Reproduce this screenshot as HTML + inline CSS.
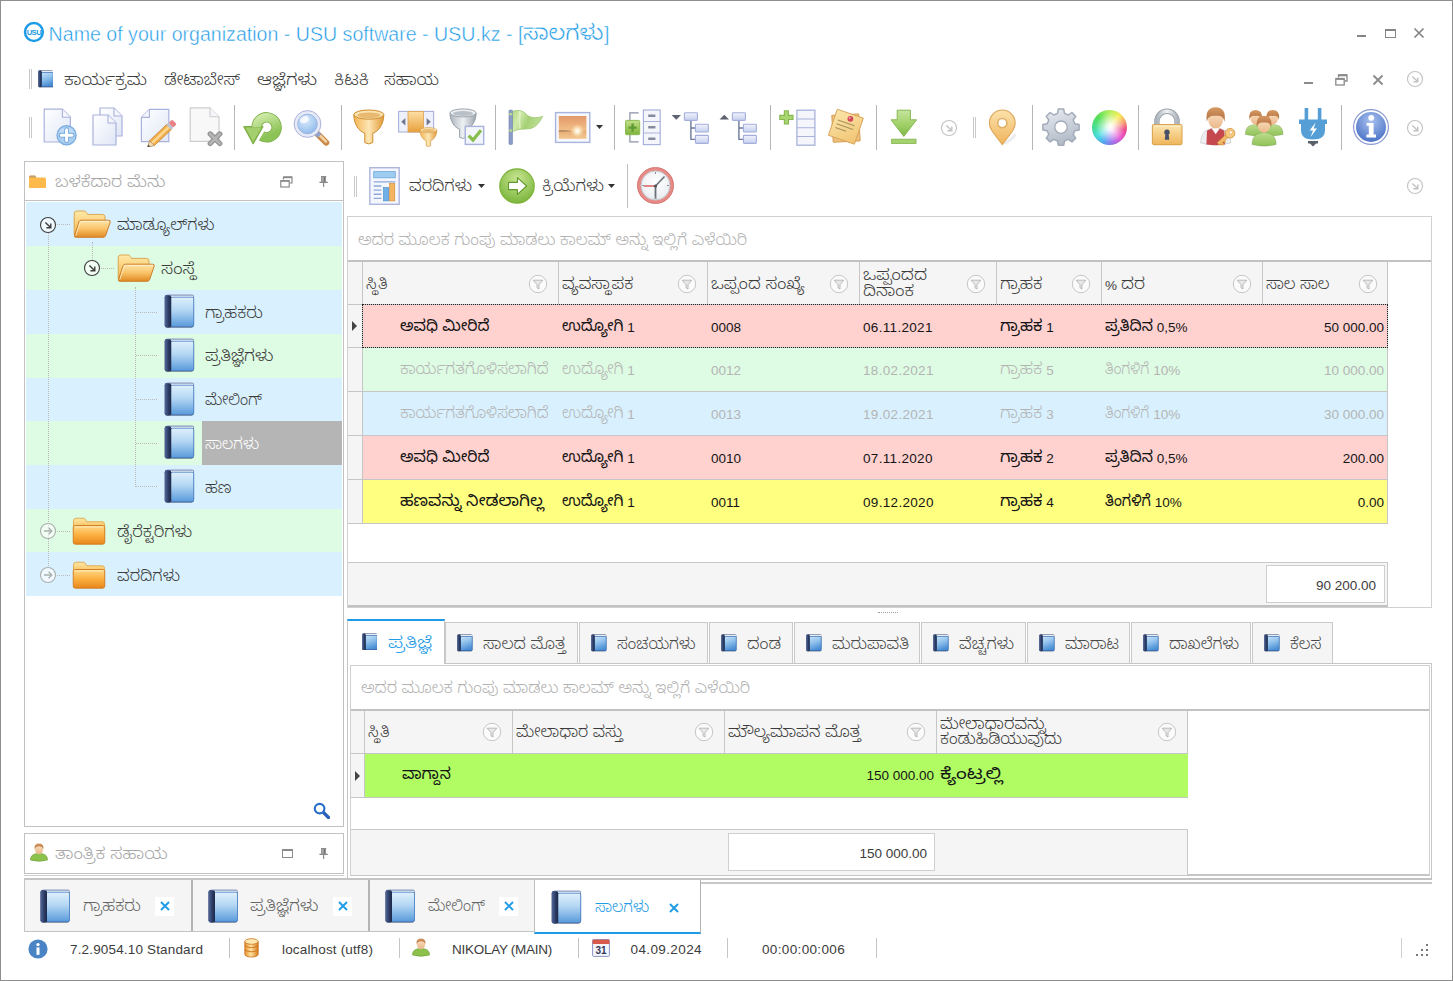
<!DOCTYPE html>
<html lang="kn"><head><meta charset="utf-8"><title>USU software</title>
<style>
html,body{margin:0;padding:0;background:#fff}
body{width:1453px;height:981px;position:relative;overflow:hidden;font-family:"Liberation Sans","Noto Sans Kannada UI","Noto Sans Kannada",sans-serif;font-size:13.5px;color:#3c3c3c}
body>div,body>svg{position:absolute}
.t{white-space:pre}
.k{font-size:1.19em;line-height:0;position:relative;top:-1px;font-weight:330}
.dark .k{font-weight:400}
.title{-webkit-text-stroke:0.45px #fff}
.title .k{font-size:1.12em;font-weight:450}
</style></head>
<body>

<svg width="0" height="0" style="position:absolute;left:0;top:0">
<defs>
<linearGradient id="gBookCover" x1="0" y1="0" x2="0" y2="1"><stop offset="0" stop-color="#dff0fc"/><stop offset="0.45" stop-color="#b3d6f3"/><stop offset="1" stop-color="#5a9bdb"/></linearGradient>
<linearGradient id="gBookCoverS" x1="0" y1="0" x2="0.3" y2="1"><stop offset="0" stop-color="#c9e4f8"/><stop offset="0.5" stop-color="#8fc0ec"/><stop offset="1" stop-color="#4a8fd4"/></linearGradient>
<linearGradient id="gBookSpine" x1="0" y1="0" x2="1" y2="0"><stop offset="0" stop-color="#52679a"/><stop offset="0.6" stop-color="#2a3a62"/><stop offset="1" stop-color="#1d2947"/></linearGradient>
<linearGradient id="gFolderBack" x1="0" y1="0" x2="0" y2="1"><stop offset="0" stop-color="#ffe9a8"/><stop offset="1" stop-color="#f5b64a"/></linearGradient>
<linearGradient id="gFolderFront" x1="0" y1="0" x2="0" y2="1"><stop offset="0" stop-color="#ffd98a"/><stop offset="0.5" stop-color="#fbb040"/><stop offset="1" stop-color="#e8871c"/></linearGradient>
<linearGradient id="gFolderOpen" x1="0" y1="0" x2="0" y2="1"><stop offset="0" stop-color="#ffe7ae"/><stop offset="0.5" stop-color="#f9c368"/><stop offset="1" stop-color="#e08a24"/></linearGradient>
<linearGradient id="gDoc" x1="0" y1="0" x2="1" y2="1"><stop offset="0" stop-color="#ffffff"/><stop offset="1" stop-color="#dfe6f6"/></linearGradient>
<linearGradient id="gGreen" x1="0" y1="0" x2="0" y2="1"><stop offset="0" stop-color="#c4e08a"/><stop offset="1" stop-color="#7eb33a"/></linearGradient>
<linearGradient id="gGreenL" x1="0" y1="0" x2="0.4" y2="1"><stop offset="0" stop-color="#cde9a6"/><stop offset="1" stop-color="#8cc356"/></linearGradient>
<linearGradient id="gGreenD" x1="0" y1="0" x2="0" y2="1"><stop offset="0" stop-color="#b6d87a"/><stop offset="1" stop-color="#6aa52e"/></linearGradient>
<linearGradient id="gOrange" x1="0" y1="0" x2="0" y2="1"><stop offset="0" stop-color="#fde0a4"/><stop offset="1" stop-color="#e9a03c"/></linearGradient>
<linearGradient id="gOrangeH" x1="0" y1="0" x2="1" y2="0"><stop offset="0" stop-color="#f3b453"/><stop offset="0.5" stop-color="#fde6b4"/><stop offset="1" stop-color="#e09a38"/></linearGradient>
<linearGradient id="gGrayH" x1="0" y1="0" x2="1" y2="0"><stop offset="0" stop-color="#aab2ba"/><stop offset="0.5" stop-color="#eef1f4"/><stop offset="1" stop-color="#9aa3ad"/></linearGradient>
<linearGradient id="gGear" x1="0" y1="0" x2="0.3" y2="1"><stop offset="0" stop-color="#e9edf2"/><stop offset="1" stop-color="#b3bcc9"/></linearGradient>
<linearGradient id="gLock" x1="0" y1="0" x2="0" y2="1"><stop offset="0" stop-color="#fce6b0"/><stop offset="1" stop-color="#efb55c"/></linearGradient>
<linearGradient id="gShackle" x1="0" y1="0" x2="1" y2="0"><stop offset="0" stop-color="#aeb5bd"/><stop offset="0.5" stop-color="#f1f3f6"/><stop offset="1" stop-color="#aeb5bd"/></linearGradient>
<linearGradient id="gBodyG" x1="0" y1="0" x2="0" y2="1"><stop offset="0" stop-color="#bcdc8e"/><stop offset="1" stop-color="#8fc257"/></linearGradient>
<radialGradient id="gInfo" cx="0.5" cy="0.3" r="0.8"><stop offset="0" stop-color="#a9c1ee"/><stop offset="1" stop-color="#3f68c2"/></radialGradient>
<radialGradient id="gLens" cx="0.4" cy="0.3" r="0.8"><stop offset="0" stop-color="#dcebfb"/><stop offset="0.6" stop-color="#a9cbf1"/><stop offset="1" stop-color="#86b6ea"/></radialGradient>
<radialGradient id="gGreenBall" cx="0.5" cy="0.3" r="0.8"><stop offset="0" stop-color="#c9e592"/><stop offset="1" stop-color="#6fae2f"/></radialGradient>
<radialGradient id="gClock" cx="0.5" cy="0.4" r="0.7"><stop offset="0" stop-color="#ffffff"/><stop offset="1" stop-color="#e4e9ee"/></radialGradient>
<linearGradient id="gPic" x1="0" y1="0" x2="0" y2="1"><stop offset="0" stop-color="#e2986a"/><stop offset="0.6" stop-color="#f2bd86"/><stop offset="0.68" stop-color="#e8ae78"/><stop offset="1" stop-color="#f3c78e"/></linearGradient>
<radialGradient id="gSun" cx="0.5" cy="0.5" r="0.5"><stop offset="0" stop-color="#ffffff"/><stop offset="0.3" stop-color="#fff6dc" stop-opacity="0.9"/><stop offset="1" stop-color="#fbe0a8" stop-opacity="0"/></radialGradient>
<linearGradient id="gFlag" x1="0" y1="0" x2="1" y2="0.3"><stop offset="0" stop-color="#b4d987"/><stop offset="0.3" stop-color="#cfe9ab"/><stop offset="0.6" stop-color="#a5d074"/><stop offset="1" stop-color="#bfe096"/></linearGradient>
<linearGradient id="gSkin" x1="0" y1="0" x2="0" y2="1"><stop offset="0" stop-color="#fae0c0"/><stop offset="1" stop-color="#ebb88c"/></linearGradient>
<linearGradient id="gHair" x1="0" y1="0" x2="0" y2="1"><stop offset="0" stop-color="#d69a64"/><stop offset="1" stop-color="#b06c3c"/></linearGradient>
<linearGradient id="gBlueBox" x1="0" y1="0" x2="0" y2="1"><stop offset="0" stop-color="#f1f4fc"/><stop offset="1" stop-color="#c5cfee"/></linearGradient>
<linearGradient id="gNote" x1="0" y1="0" x2="1" y2="1"><stop offset="0" stop-color="#fbe6aa"/><stop offset="1" stop-color="#f1c473"/></linearGradient>
<linearGradient id="gGreenDL" x1="0" y1="0" x2="0" y2="1"><stop offset="0" stop-color="#c6e49e"/><stop offset="0.5" stop-color="#a4d26c"/><stop offset="1" stop-color="#7fb846"/></linearGradient>
<linearGradient id="gPin" x1="0" y1="0" x2="0" y2="1"><stop offset="0" stop-color="#fce2ac"/><stop offset="1" stop-color="#f0b45c"/></linearGradient>
<linearGradient id="gDb" x1="0" y1="0" x2="1" y2="0"><stop offset="0" stop-color="#e8902c"/><stop offset="0.45" stop-color="#ffe2a0"/><stop offset="1" stop-color="#d97c1c"/></linearGradient>
</defs></svg>

<div style="left:0px;top:0px;width:1453px;height:981px;border:1px solid #8e8e8e;box-sizing:border-box;background:#fff"></div>
<svg style="position:absolute;left:23px;top:21.2px" width="22" height="22" viewBox="0 0 22 22" ><circle cx="10.9" cy="11" r="8.9" fill="#fff" stroke="#1e9be6" stroke-width="2.5"/><text x="10.9" y="13.7" font-family="Liberation Sans, sans-serif" font-size="7.6" font-weight="bold" text-anchor="middle" fill="#1e9be6" letter-spacing="-0.5">USU</text></svg>
<div class="t title" style="left:48.6px;top:18.5px;height:30px;line-height:30px;color:#1e9be6;font-size:19.6px;">Name of your organization - USU software - USU.kz - [</div>
<div class="t title" style="left:523.4px;width:81.6px;overflow:hidden;transform:scaleX(1.005);transform-origin:0 50%;top:18.5px;height:30px;line-height:30px;color:#1e9be6;font-size:19.6px;"><span class="k">ಸಾಲಗಳು</span></div>
<div class="t title" style="left:603.9px;top:18.5px;height:30px;line-height:30px;color:#1e9be6;font-size:19.6px;">]</div>
<div style="left:1357px;top:35px;width:9px;height:2px;background:#858585"></div>
<div style="left:1385px;top:29px;width:11px;height:9px;border:1px solid #858585;border-top-width:2px;box-sizing:border-box"></div>
<svg style="position:absolute;left:1413px;top:27px" width="12" height="12" viewBox="0 0 12 12" ><path d="M1.5 1.5 L10.5 10.5 M10.5 1.5 L1.5 10.5" stroke="#858585" stroke-width="1.7"/></svg>
<div style="left:29px;top:69px;width:1px;height:20px;background:#c9c9c9"></div>
<div style="left:31px;top:69px;width:1px;height:20px;background:#c9c9c9"></div>
<svg style="position:absolute;left:37.5px;top:70px" width="15.5" height="17.5" viewBox="0 0 15.5 17.5" ><rect x="0.3" y="0.6" width="15" height="16.6" rx="1.2" fill="#22315a"/><rect x="3" y="0.9" width="12" height="1.6" fill="#f4f8fc"/><rect x="3.4" y="2.4" width="11.8" height="14.2" rx="0.8" fill="url(#gBookCoverS)" stroke="#3f78c0" stroke-width="0.7"/><rect x="0.3" y="0.6" width="3.4" height="16.6" rx="1.2" fill="url(#gBookSpine)"/></svg>
<div class="t" style="left:64.0px;width:76.0px;overflow:hidden;transform:scaleX(1.115);transform-origin:0 50%;top:70.0px;height:24px;line-height:24px;color:#3c3c3c"><span class="k">ಕಾರ್ಯಕ್ರಮ</span></div>
<div class="t" style="left:164.0px;width:73.4px;overflow:hidden;transform:scaleX(1.057);transform-origin:0 50%;top:70.0px;height:24px;line-height:24px;color:#3c3c3c"><span class="k">ಡೇಟಾಬೇಸ್</span></div>
<div class="t" style="left:257.0px;width:53.4px;overflow:hidden;transform:scaleX(1.156);transform-origin:0 50%;top:70.0px;height:24px;line-height:24px;color:#3c3c3c"><span class="k">ಆಜ್ಞೆಗಳು</span></div>
<div class="t" style="left:334.0px;width:31.7px;overflow:hidden;transform:scaleX(1.160);transform-origin:0 50%;top:70.0px;height:24px;line-height:24px;color:#3c3c3c"><span class="k">ಕಿಟಕಿ</span></div>
<div class="t" style="left:384.0px;width:52.9px;overflow:hidden;transform:scaleX(1.069);transform-origin:0 50%;top:70.0px;height:24px;line-height:24px;color:#3c3c3c"><span class="k">ಸಹಾಯ</span></div>
<div style="left:1304px;top:82px;width:9px;height:2px;background:#8a8a8a"></div>
<svg style="position:absolute;left:1335px;top:74px" width="13" height="12" viewBox="0 0 13 12" ><path d="M3.5 3.5 V1 H12 V7 H9.5" fill="none" stroke="#8a8a8a" stroke-width="1.3"/><path d="M3.5 1.3 H12" stroke="#8a8a8a" stroke-width="2"/><rect x="0.8" y="4.6" width="8.4" height="6.4" fill="#fff" stroke="#8a8a8a" stroke-width="1.3"/><path d="M0.8 4.9 H9.2" stroke="#8a8a8a" stroke-width="2"/></svg>
<svg style="position:absolute;left:1372px;top:73.5px" width="12" height="12" viewBox="0 0 12 12" ><path d="M1.5 1.5 L10.5 10.5 M10.5 1.5 L1.5 10.5" stroke="#8a8a8a" stroke-width="1.8"/></svg>
<svg style="position:absolute;left:1405.7px;top:70px" width="18" height="18" viewBox="0 0 18 18" ><g transform="translate(9 9)"><circle r="7.5" fill="#fff" fill-opacity="0.6" stroke="#c2c2c2" stroke-width="1.1"/><path d="M-2.6 -2.6 L2.6 2.6 M2.8 -1.6 V2.8 H-1.6" fill="none" stroke="#c2c2c2" stroke-width="1.4000000000000001"/></g></svg>
<div style="left:29px;top:117px;width:1px;height:21px;background:#c9c9c9"></div>
<div style="left:31px;top:117px;width:1px;height:21px;background:#c9c9c9"></div>
<svg style="position:absolute;left:40.0px;top:107.0px" width="40" height="40" viewBox="0 0 40 40" ><path d="M4.2 2.2 H22.4 L30.4 10.2 V35.0 H4.2 Z" fill="url(#gDoc)" stroke="#a9b2dc" stroke-width="1.2" stroke-linejoin="round"/><path d="M22.4 2.2 V10.2 H30.4" fill="#f4f6fc" stroke="#a9b2dc" stroke-width="1.1" stroke-linejoin="round"/><circle cx="26.6" cy="28.2" r="9.6" fill="#a9cef1" stroke="#78abde" stroke-width="1.2"/><path d="M19 26 A8 8 0 0 1 34.2 26 Q26.6 22.5 19 26 Z" fill="#c6e0f7" opacity="0.8"/><path d="M26.6 22.6 V33.8 M21 28.2 H32.2" stroke="#6fa3d8" stroke-width="4.6" stroke-linecap="round"/><path d="M26.6 22.8 V33.6 M21.2 28.2 H32" stroke="#fff" stroke-width="3" stroke-linecap="round"/></svg>
<svg style="position:absolute;left:88.0px;top:107.0px" width="40" height="40" viewBox="0 0 40 40" ><path d="M12 1 H26 L34 9 V29 H12 Z" fill="url(#gDoc)" stroke="#a9b2dc" stroke-width="1.2" stroke-linejoin="round"/><path d="M26 1 V9 H34" fill="#f4f6fc" stroke="#a9b2dc" stroke-width="1.1" stroke-linejoin="round"/><path d="M5 8 H20 L28 16 V38 H5 Z" fill="url(#gDoc)" stroke="#a9b2dc" stroke-width="1.2" stroke-linejoin="round"/><path d="M20 8 V16 H28" fill="#f4f6fc" stroke="#a9b2dc" stroke-width="1.1" stroke-linejoin="round"/></svg>
<svg style="position:absolute;left:137.0px;top:107.0px" width="40" height="40" viewBox="0 0 40 40" ><path d="M12.4 2.4 H31.8 V34.7 H4.4 V10.4 Z" fill="url(#gDoc)" stroke="#a9b2dc" stroke-width="1.2" stroke-linejoin="round"/><path d="M12.4 2.4 V10.4 H4.4" fill="#f4f6fc" stroke="#a9b2dc" stroke-width="1.1" stroke-linejoin="round"/><g transform="translate(12.8 38.2) rotate(-43.5)"><rect x="3" y="-3.4" width="24" height="6.8" fill="#f3b04a" stroke="#c9832a" stroke-width="0.8"/><rect x="3" y="-1.3" width="24" height="2.4" fill="#fbd894"/><path d="M3 -3.4 L-3.5 0 L3 3.4 Z" fill="#f3d9b0" stroke="#b08a5a" stroke-width="0.7"/><path d="M-3.5 0 L-0.6 -1.5 V1.5 Z" fill="#555"/><rect x="26" y="-3.4" width="3" height="6.8" fill="#b9c4d4"/><rect x="29" y="-3.4" width="5" height="6.8" rx="1.6" fill="#e8838a"/></g></svg>
<svg style="position:absolute;left:186.0px;top:107.0px" width="40" height="40" viewBox="0 0 40 40" ><path d="M4.2 0.8 H24.0 L33.0 9.8 V34.3 H4.2 Z" fill="#f8f8f8" stroke="#cdcdcd" stroke-width="1.2" stroke-linejoin="round"/><path d="M24.0 0.8 V9.8 H33.0" fill="#f4f6fc" stroke="#cdcdcd" stroke-width="1.1" stroke-linejoin="round"/><path d="M24.2 26.9 L33.8 36.5 M33.8 26.9 L24.2 36.5" stroke="#939393" stroke-width="5.2" stroke-linecap="round"/><path d="M24.2 26.9 L33.8 36.5 M33.8 26.9 L24.2 36.5" stroke="#b4b4b4" stroke-width="2.8" stroke-linecap="round"/></svg>
<svg style="position:absolute;left:243.0px;top:107.0px" width="40" height="40" viewBox="0 0 40 40" ><path d="M18.6 29 A10 10 0 1 0 13.6 20.3" fill="none" stroke="#7fb04a" stroke-width="10.4"/><path d="M1 19.6 H19.8 L10.2 36.6 Z" fill="#7fb04a" stroke="#7fb04a" stroke-width="1.4" stroke-linejoin="round"/><path d="M18.6 29 A10 10 0 1 0 13.6 20.3" fill="none" stroke="url(#gGreenL)" stroke-width="8.6"/><path d="M2.4 20.4 H18.4 L10.2 35 Z" fill="#a3d06c"/></svg>
<svg style="position:absolute;left:292.0px;top:107.0px" width="40" height="40" viewBox="0 0 40 40" ><path d="M25 26.5 L34.2 35.6" stroke="#c98a4a" stroke-width="6.2" stroke-linecap="round"/><path d="M25.4 26 L34 34.6" stroke="#f6d2a0" stroke-width="2.6" stroke-linecap="round"/><path d="M23 24.5 L27.5 29" stroke="#8fa2cc" stroke-width="5.2"/><circle cx="15.5" cy="17" r="13.4" fill="#e6eaf7" stroke="#a4acd6" stroke-width="0.9"/><circle cx="15.5" cy="17" r="9.8" fill="url(#gLens)" stroke="#9ab0dc" stroke-width="0.9"/><ellipse cx="12.4" cy="12.6" rx="4.6" ry="3.2" fill="#fff" opacity="0.75" transform="rotate(-25 12.4 12.6)"/></svg>
<svg style="position:absolute;left:349.0px;top:107.0px" width="40" height="40" viewBox="0 0 40 40" ><g transform="translate(4.8 2.6) scale(1.0)"><path d="M0 5 C0 15 5.5 22 11 23.6 V33 Q15 35.6 19 33 V23.6 C24.5 22 30 15 30 5 Z" fill="url(#gOrangeH)" stroke="#cf8e30" stroke-width="1"/><ellipse cx="15" cy="5" rx="15" ry="4.6" fill="#fbe3b0" stroke="#cf8e30" stroke-width="1"/><ellipse cx="15" cy="5.7" rx="11.6" ry="2.9" fill="#d9983c" opacity="0.55"/></g></svg>
<svg style="position:absolute;left:398.0px;top:107.0px" width="40" height="40" viewBox="0 0 40 40" ><rect x="0.6" y="4.4" width="35" height="20.6" fill="#eef1fb" stroke="#a9b2dc" stroke-width="1.1"/><rect x="10" y="4.4" width="15.4" height="20.6" fill="url(#gOrange)" stroke="#dda04c" stroke-width="0.8"/><path d="M7.4 11 V18.4 L3.2 14.7 Z M28.6 11 V18.4 L32.8 14.7 Z" fill="#707890"/><g transform="translate(22 20.4) scale(0.56)"><path d="M0 5 C0 15 5.5 22 11 23.6 V33 Q15 35.6 19 33 V23.6 C24.5 22 30 15 30 5 Z" fill="url(#gOrangeH)" stroke="#cf8e30" stroke-width="1"/><ellipse cx="15" cy="5" rx="15" ry="4.6" fill="#fbe3b0" stroke="#cf8e30" stroke-width="1"/><ellipse cx="15" cy="5.7" rx="11.6" ry="2.9" fill="#d9983c" opacity="0.55"/></g></svg>
<svg style="position:absolute;left:447.0px;top:107.0px" width="40" height="40" viewBox="0 0 40 40" ><g transform="translate(3 1.6) scale(0.87)"><path d="M0 5 C0 15 5.5 22 11 23.6 V33 Q15 35.6 19 33 V23.6 C24.5 22 30 15 30 5 Z" fill="url(#gGrayH)" stroke="#8f98a2" stroke-width="1"/><ellipse cx="15" cy="5" rx="15" ry="4.6" fill="#eef1f4" stroke="#8f98a2" stroke-width="1"/><ellipse cx="15" cy="5.7" rx="11.6" ry="2.9" fill="#8f98a2" opacity="0.55"/></g><rect x="18.3" y="19.4" width="18.4" height="18" fill="#f3f5fc" stroke="#a9b2dc" stroke-width="1.4"/><path d="M21.6 28.6 L26 33 L34 23.2" fill="none" stroke="#86bf4e" stroke-width="3.2"/></svg>
<svg style="position:absolute;left:505.0px;top:107.0px" width="40" height="40" viewBox="0 0 40 40" ><path d="M7.2 4.6 C13 2.4 18 3.4 21.5 7.4 C25 11 31 11.6 37.6 9.4 C35 14.5 31 20.6 25 21.6 C19 22.6 13 21.2 7.2 25 Z" fill="url(#gFlag)" stroke="#9cc772" stroke-width="0.8"/><path d="M15 4 C14 10 14 16 15 21.5" fill="none" stroke="#e4f3c8" stroke-width="2" opacity="0.7"/><rect x="4" y="3" width="3.5" height="34.6" rx="1" fill="#8c9cc8" stroke="#7484b4" stroke-width="0.6"/><rect x="4.2" y="6" width="3.1" height="2.2" fill="#b9d98a"/><rect x="4.2" y="22.5" width="3.1" height="2.2" fill="#b9d98a"/></svg>
<svg style="position:absolute;left:553.0px;top:107.0px" width="40" height="40" viewBox="0 0 40 40" ><rect x="2.6" y="5.6" width="34.2" height="29.8" fill="#f6f8fd" stroke="#a9b4dc" stroke-width="1.4"/><rect x="5.8" y="9" width="27.6" height="22.8" fill="url(#gPic)"/><path d="M5.8 23.2 Q12 22.4 19 24.2 L5.8 25 Z" fill="#8a6a4a" opacity="0.55"/><circle cx="24.3" cy="24" r="7" fill="url(#gSun)"/></svg>
<svg style="position:absolute;left:623.0px;top:107.0px" width="40" height="40" viewBox="0 0 40 40" ><path d="M15.6 5.9 H6.9 V34.8 H15.6" fill="none" stroke="#8a90a4" stroke-width="1.2"/><rect x="20.4" y="3" width="16.8" height="34.6" fill="#f4f6fc" stroke="#a9b2dc" stroke-width="1.2"/><path d="M20.4 14.5 H37.2 M20.4 26 H37.2" stroke="#a9b2dc" stroke-width="1.1"/><path d="M25.2 8.8 H32.4 M25.2 20.2 H32.4 M25.2 31.8 H32.4" stroke="#858b9c" stroke-width="2.4"/><rect x="2.5" y="13.4" width="14.2" height="14.3" rx="1" fill="url(#gGreen)" stroke="#8cbc55" stroke-width="1"/><path d="M9.6 16.6 V24.6 M5.6 20.6 H13.6" stroke="#5f9a32" stroke-width="2.4"/></svg>
<svg style="position:absolute;left:671.0px;top:107.0px" width="40" height="40" viewBox="0 0 40 40" ><path d="M0.6 8 H10 L5.3 12.8 Z" fill="#5d6170"/><path d="M19.9 13.4 V32.4 H25 M19.9 21 H25" fill="none" stroke="#6f7898" stroke-width="1.4"/><rect x="13.4" y="5.8" width="13" height="7.6" rx="0.8" fill="url(#gBlueBox)" stroke="#a4aedb" stroke-width="1.1"/><rect x="24.4" y="17.2" width="13" height="7.8" rx="0.8" fill="url(#gBlueBox)" stroke="#a4aedb" stroke-width="1.1"/><rect x="24.4" y="28.4" width="13" height="8" rx="0.8" fill="url(#gBlueBox)" stroke="#a4aedb" stroke-width="1.1"/></svg>
<svg style="position:absolute;left:719.0px;top:107.0px" width="40" height="40" viewBox="0 0 40 40" ><path d="M0.6 12.6 H10 L5.3 7.8 Z" fill="#5d6170"/><path d="M19.9 13.4 V32.4 H25 M19.9 21 H25" fill="none" stroke="#6f7898" stroke-width="1.4"/><rect x="13.4" y="5.8" width="13" height="7.6" rx="0.8" fill="url(#gBlueBox)" stroke="#a4aedb" stroke-width="1.1"/><rect x="24.4" y="17.2" width="13" height="7.8" rx="0.8" fill="url(#gBlueBox)" stroke="#a4aedb" stroke-width="1.1"/><rect x="24.4" y="28.4" width="13" height="8" rx="0.8" fill="url(#gBlueBox)" stroke="#a4aedb" stroke-width="1.1"/></svg>
<svg style="position:absolute;left:777.0px;top:107.0px" width="40" height="40" viewBox="0 0 40 40" ><rect x="19.9" y="3.2" width="18" height="35" fill="#f4f6fc" stroke="#a9b2dc" stroke-width="1.3"/><path d="M19.9 12 H37.9 M19.9 20.7 H37.9 M19.9 29.5 H37.9" stroke="#a9b2dc" stroke-width="1.1"/><path d="M9.4 3.2 V17.6 M2.2 10.4 H16.6" stroke="#86b84e" stroke-width="5.2"/><path d="M9.4 4.2 V16.6 M3.2 10.4 H15.6" stroke="#a9d472" stroke-width="3"/></svg>
<svg style="position:absolute;left:826.0px;top:107.0px" width="40" height="40" viewBox="0 0 40 40" ><g transform="translate(0 1.6)"><g transform="rotate(-3 20 20)"><rect x="6.5" y="6" width="27" height="27" fill="#efc07a" stroke="#d39a50" stroke-width="0.9"/></g><g transform="rotate(19 20 20)"><rect x="5.5" y="4.5" width="27.5" height="27.5" fill="url(#gNote)" stroke="#d8a45a" stroke-width="0.9"/><path d="M9.5 14.5 H27 M9.5 18.5 H27 M9.5 22.5 H21" stroke="#a8925e" stroke-width="1.1"/></g><circle cx="24.4" cy="10.2" r="2.9" fill="#d2465a"/><circle cx="23.7" cy="9.4" r="1" fill="#f3a0aa"/></g></svg>
<svg style="position:absolute;left:884.0px;top:107.0px" width="40" height="40" viewBox="0 0 40 40" ><path d="M13.2 3.2 H26.4 V12.8 H32.6 L19.8 29.4 L7 12.8 H13.2 Z" fill="url(#gGreenDL)" stroke="#86b852" stroke-width="1" stroke-linejoin="round"/><rect x="7.6" y="32.2" width="24.4" height="4.2" fill="#a5d26e" stroke="#86b852" stroke-width="0.9"/></svg>
<svg style="position:absolute;left:982.0px;top:107.0px" width="40" height="40" viewBox="0 0 40 40" ><path d="M22 36.5 Q30 33 33.5 27" fill="none" stroke="#000" stroke-width="3" opacity="0.07"/><path d="M20.3 37.6 C13 27.5 7.4 22.4 7.4 15.9 A12.9 12.9 0 0 1 33.2 15.9 C33.2 22.4 27.6 27.5 20.3 37.6 Z" fill="url(#gPin)" stroke="#dda657" stroke-width="1.1"/><circle cx="20.3" cy="16.1" r="4.6" fill="#fff" stroke="#e0b06a" stroke-width="1.6"/></svg>
<svg style="position:absolute;left:1041.0px;top:107.0px" width="40" height="40" viewBox="0 0 40 40" ><path d="M17.3 2.1 L22.7 2.1 L23.5 6.4 L27.2 8.0 L30.9 5.5 L34.7 9.3 L32.2 13.0 L33.8 16.7 L38.1 17.5 L38.1 22.9 L33.8 23.7 L32.2 27.4 L34.7 31.1 L30.9 34.9 L27.2 32.4 L23.5 34.0 L22.7 38.3 L17.3 38.3 L16.5 34.0 L12.8 32.4 L9.1 34.9 L5.3 31.1 L7.8 27.4 L6.2 23.7 L1.9 22.9 L1.9 17.5 L6.2 16.7 L7.8 13.0 L5.3 9.3 L9.1 5.5 L12.8 8.0 L16.5 6.4 Z" fill="url(#gGear)" stroke="#a3abb9" stroke-width="1.5" stroke-linejoin="round"/><circle cx="20" cy="20.2" r="6.2" fill="#fff" stroke="#a3abb9" stroke-width="1.3"/></svg>
<div style="position:absolute;left:1091.8px;top:109.8px;width:35px;height:35px;border-radius:50%;background:radial-gradient(circle at 52% 50%, #fff 0%, rgba(255,255,255,0.85) 14%, rgba(255,255,255,0) 58%),conic-gradient(from 0deg, #b4f060 0deg, #f8ee5c 40deg, #f8a070 70deg, #f04a90 98deg, #e85cd8 135deg, #9a7af0 172deg, #5aa8f4 200deg, #4ae0e0 235deg, #48e094 270deg, #56e058 312deg, #b4f060 360deg);box-shadow: inset 0 -1px 3px rgba(0,0,0,0.10)"></div>
<svg style="position:absolute;left:1146.5px;top:107.0px" width="40" height="40" viewBox="0 0 40 40" ><path d="M9.9 19 V14.4 A10.1 10.1 0 0 1 30.1 14.4 V19" fill="none" stroke="#98a0a9" stroke-width="5.4"/><path d="M9.9 19 V14.4 A10.1 10.1 0 0 1 30.1 14.4 V19" fill="none" stroke="url(#gShackle)" stroke-width="3.6"/><rect x="5.4" y="17.6" width="29.6" height="20" rx="1.6" fill="url(#gLock)" stroke="#dba652" stroke-width="1.1"/><path d="M6.6 19 H33.8" stroke="#fff1cf" stroke-width="1"/><circle cx="20" cy="25.2" r="2.7" fill="#465068"/><path d="M18.6 25.6 L17.7 32.8 H22.3 L21.4 25.6 Z" fill="#465068"/></svg>
<svg style="position:absolute;left:1196.0px;top:107.0px" width="40" height="40" viewBox="0 0 40 40" ><g transform="translate(4.6 1.2) scale(1.16)"><path d="M0 30 Q0 19.5 8.5 17.8 L13 17 L17.5 17.8 Q26 19.5 26 30 Q13 33.5 0 30 Z" fill="#eceef2" stroke="rgba(0,0,0,0.16)" stroke-width="0.7"/><path d="M5.5 19.4 L9.4 17.6 L13 22.5 L16.6 17.6 L20.5 19.4 L21 31.4 Q13 32.6 5 31.4 Z" fill="#c6484f"/><path d="M10.4 17.4 L13 21.4 L15.6 17.4 L14.6 16.6 H11.4 Z" fill="#fff"/><ellipse cx="13" cy="9.8" rx="6.4" ry="7.8" fill="url(#gSkin)"/><path d="M5.4 11.6 Q3.4 -0.6 13 -0.8 Q22.6 -0.6 20.6 11.6 Q19.6 5.6 13 6.6 Q6.4 5.6 5.4 11.6 Z" fill="url(#gHair)"/></g><g transform="translate(22.5 37) rotate(-43)"><rect x="0" y="-1.8" width="12" height="3.6" fill="#f2bc66" stroke="#cf913e" stroke-width="0.6"/><path d="M2 1.8 V4 H4 V1.8 M5.5 1.8 V3.4 H7 V1.8" fill="#f2bc66" stroke="#cf913e" stroke-width="0.5"/><circle cx="15.8" cy="0" r="4.8" fill="#f6c97e" stroke="#cf913e" stroke-width="0.8"/><circle cx="17" cy="0" r="1.5" fill="#fff" stroke="#cf913e" stroke-width="0.4"/></g></svg>
<svg style="position:absolute;left:1244.0px;top:107.0px" width="40" height="40" viewBox="0 0 40 40" ><g transform="translate(1.2 3.6) scale(0.8)"><path d="M0 30 Q0 19.5 8.5 17.8 L13 17 L17.5 17.8 Q26 19.5 26 30 Q13 33.5 0 30 Z" fill="url(#gBodyG)" stroke="rgba(0,0,0,0.16)" stroke-width="0.7"/><ellipse cx="13" cy="9.8" rx="6.4" ry="7.8" fill="url(#gSkin)"/><path d="M5.4 11.6 Q3.4 -0.6 13 -0.8 Q22.6 -0.6 20.6 11.6 Q19.6 5.6 13 6.6 Q6.4 5.6 5.4 11.6 Z" fill="url(#gHair)"/></g><g transform="translate(18.4 3.6) scale(0.8)"><path d="M0 30 Q0 19.5 8.5 17.8 L13 17 L17.5 17.8 Q26 19.5 26 30 Q13 33.5 0 30 Z" fill="url(#gBodyG)" stroke="rgba(0,0,0,0.16)" stroke-width="0.7"/><ellipse cx="13" cy="9.8" rx="6.4" ry="7.8" fill="url(#gSkin)"/><path d="M5.4 11.6 Q3.4 -0.6 13 -0.8 Q22.6 -0.6 20.6 11.6 Q19.6 5.6 13 6.6 Q6.4 5.6 5.4 11.6 Z" fill="url(#gHair)"/></g><g transform="translate(7.8 9.4) scale(0.94)"><path d="M0 30 Q0 19.5 8.5 17.8 L13 17 L17.5 17.8 Q26 19.5 26 30 Q13 33.5 0 30 Z" fill="url(#gBodyG)" stroke="rgba(0,0,0,0.16)" stroke-width="0.7"/><ellipse cx="13" cy="9.8" rx="6.4" ry="7.8" fill="url(#gSkin)"/><path d="M5.4 11.6 Q3.4 -0.6 13 -0.8 Q22.6 -0.6 20.6 11.6 Q19.6 5.6 13 6.6 Q6.4 5.6 5.4 11.6 Z" fill="url(#gHair)"/></g></svg>
<svg style="position:absolute;left:1292.5px;top:107.0px" width="40" height="40" viewBox="0 0 40 40" ><rect x="11.6" y="1" width="3.6" height="14" fill="#559fd6"/><rect x="24.8" y="1" width="3.6" height="14" fill="#559fd6"/><path d="M6 12.5 H34 V17 H32 V23 Q32 32.5 20 32.5 Q8 32.5 8 23 V17 H6 Z" fill="#559fd6"/><path d="M22.6 15.5 L16.6 23.6 H20 L17.6 30 L24 21.4 H20.6 Z" fill="#fff"/><path d="M15 34 H25 V36.4 H23 L20 39.4 L17 36.4 H15 Z" fill="#5a6068"/></svg>
<svg style="position:absolute;left:1350.5px;top:107.0px" width="40" height="40" viewBox="0 0 40 40" ><circle cx="20" cy="20" r="17.4" fill="#fff" stroke="#8a9ad0" stroke-width="1.2"/><circle cx="20" cy="20" r="15" fill="url(#gInfo)"/><circle cx="20.2" cy="10.8" r="2.9" fill="#fff"/><path d="M15.6 16 H22.6 V27.6 H25 V30.4 H15.4 V27.6 H17.8 V18.8 H15.6 Z" fill="#fff"/></svg>
<div style="left:234px;top:105px;width:1px;height:45px;background:#b6b6b6"></div>
<div style="left:341px;top:105px;width:1px;height:45px;background:#b6b6b6"></div>
<div style="left:495px;top:105px;width:1px;height:45px;background:#b6b6b6"></div>
<div style="left:614px;top:105px;width:1px;height:45px;background:#b6b6b6"></div>
<div style="left:770px;top:105px;width:1px;height:45px;background:#b6b6b6"></div>
<div style="left:876px;top:105px;width:1px;height:45px;background:#b6b6b6"></div>
<div style="left:1032px;top:105px;width:1px;height:45px;background:#b6b6b6"></div>
<div style="left:1138px;top:105px;width:1px;height:45px;background:#b6b6b6"></div>
<div style="left:1341px;top:105px;width:1px;height:45px;background:#b6b6b6"></div>
<svg style="position:absolute;left:596px;top:125px" width="7" height="4" viewBox="0 0 7 4" ><path d="M0 0 H7 L3.5 4 Z" fill="#333"/></svg>
<svg style="position:absolute;left:939.5px;top:119px" width="18" height="18" viewBox="0 0 18 18" ><g transform="translate(9 9)"><circle r="7.5" fill="#fff" fill-opacity="0.6" stroke="#c2c2c2" stroke-width="1.1"/><path d="M-2.6 -2.6 L2.6 2.6 M2.8 -1.6 V2.8 H-1.6" fill="none" stroke="#c2c2c2" stroke-width="1.4000000000000001"/></g></svg>
<div style="left:973px;top:117px;width:1px;height:21px;background:#c9c9c9"></div>
<div style="left:975px;top:117px;width:1px;height:21px;background:#c9c9c9"></div>
<svg style="position:absolute;left:1405.7px;top:118.5px" width="18" height="18" viewBox="0 0 18 18" ><g transform="translate(9 9)"><circle r="7.5" fill="#fff" fill-opacity="0.6" stroke="#c2c2c2" stroke-width="1.1"/><path d="M-2.6 -2.6 L2.6 2.6 M2.8 -1.6 V2.8 H-1.6" fill="none" stroke="#c2c2c2" stroke-width="1.4000000000000001"/></g></svg>
<div style="left:24px;top:161px;width:320px;height:666px;border:1px solid #c2c2c2;box-sizing:border-box;background:#fff"></div>
<div style="left:25px;top:200px;width:318px;height:1px;background:#c2c2c2"></div>
<svg style="position:absolute;left:29px;top:175px" width="17" height="13" viewBox="0 0 17 13" ><path d="M0 2 Q0 0.5 1.5 0.5 H6 L7.5 2.5 H15.5 Q17 2.5 17 4 V12 Q17 13 16 13 H1 Q0 13 0 12 Z" fill="#fdb94a"/><path d="M0 2 Q0 0.5 1.5 0.5 H6 L7.5 2.5 H0 Z" fill="#8a8a8a" opacity="0.55"/></svg>
<div class="t" style="left:54.5px;width:102.2px;overflow:hidden;transform:scaleX(1.097);transform-origin:0 50%;top:171.5px;height:24px;line-height:24px;color:#a6a6a6"><span class="k">ಬಳಕೆದಾರ ಮೆನು</span></div>
<svg style="position:absolute;left:280px;top:175.5px" width="13" height="12" viewBox="0 0 13 12" ><path d="M3.5 3.5 V1 H12 V7 H9.5" fill="none" stroke="#8a8a8a" stroke-width="1.2"/><path d="M3.5 1.3 H12" stroke="#8a8a8a" stroke-width="1.8"/><rect x="0.8" y="4.6" width="8.4" height="6.4" fill="#fff" stroke="#8a8a8a" stroke-width="1.2"/><path d="M0.8 4.9 H9.2" stroke="#8a8a8a" stroke-width="1.8"/></svg>
<svg style="position:absolute;left:319px;top:176px" width="9" height="11.5" viewBox="0 0 9 11.5" ><path d="M2 0.6 H7.2" stroke="#8a8a8a" stroke-width="1.2"/><rect x="2.6" y="0.6" width="4" height="5.6" fill="#a8a8a8" stroke="#8a8a8a" stroke-width="0.9"/><path d="M5.4 1 V6" stroke="#777" stroke-width="1.2"/><path d="M0.4 6.4 H8.8 M4.6 6.6 V11" fill="none" stroke="#8a8a8a" stroke-width="1.2"/></svg>
<div style="left:25.5px;top:202px;width:316px;height:44px;background:#d9f1ff"></div>
<div style="left:25.5px;top:246px;width:316px;height:44px;background:#defbe3"></div>
<div style="left:25.5px;top:290px;width:316px;height:44px;background:#d9f1ff"></div>
<div style="left:25.5px;top:334px;width:316px;height:44px;background:#defbe3"></div>
<div style="left:25.5px;top:378px;width:316px;height:43px;background:#d9f1ff"></div>
<div style="left:25.5px;top:421px;width:316px;height:44px;background:#defbe3"></div>
<div style="left:25.5px;top:465px;width:316px;height:44px;background:#d9f1ff"></div>
<div style="left:25.5px;top:509px;width:316px;height:43px;background:#defbe3"></div>
<div style="left:25.5px;top:552px;width:316px;height:44px;background:#d9f1ff"></div>
<div style="left:48px;top:233px;width:0px;height:333px;border-left:1px dotted #b9b9b9"></div>
<div style="left:57px;top:224px;width:13px;height:0px;border-top:1px dotted #b9b9b9"></div>
<div style="left:57px;top:531px;width:13px;height:0px;border-top:1px dotted #b9b9b9"></div>
<div style="left:57px;top:575px;width:13px;height:0px;border-top:1px dotted #b9b9b9"></div>
<div style="left:92px;top:242px;width:0px;height:18px;border-left:1px dotted #b9b9b9"></div>
<div style="left:101px;top:268px;width:13px;height:0px;border-top:1px dotted #b9b9b9"></div>
<div style="left:135px;top:287px;width:0px;height:200px;border-left:1px dotted #b9b9b9"></div>
<div style="left:136px;top:312px;width:21px;height:0px;border-top:1px dotted #b9b9b9"></div>
<div style="left:136px;top:355px;width:21px;height:0px;border-top:1px dotted #b9b9b9"></div>
<div style="left:136px;top:399px;width:21px;height:0px;border-top:1px dotted #b9b9b9"></div>
<div style="left:136px;top:443px;width:21px;height:0px;border-top:1px dotted #b9b9b9"></div>
<div style="left:136px;top:486px;width:21px;height:0px;border-top:1px dotted #b9b9b9"></div>
<svg style="position:absolute;left:39px;top:215.5px" width="18" height="18" viewBox="0 0 18 18" ><g transform="translate(9 9)"><circle r="7.5" fill="#fff" fill-opacity="0.6" stroke="#3d3d3d" stroke-width="1.1"/><path d="M-2.6 -2.6 L2.6 2.6 M2.8 -1.6 V2.8 H-1.6" fill="none" stroke="#3d3d3d" stroke-width="1.4000000000000001"/></g></svg>
<svg style="position:absolute;left:72.5px;top:210.0px" width="38" height="28" viewBox="0 0 38 28" ><path d="M1.2 25 V3.5 Q1.2 1 3.8 1 H11 Q12.6 1 13.4 2.4 L14.6 4.4 H29.5 Q32 4.4 32 7 V11 H8 L3 26 Z" fill="url(#gFolderBack)" stroke="#d9a045" stroke-width="0.9"/><path d="M8.2 10.2 H35.6 Q37.8 10.2 37.1 12.4 L32.6 25.6 Q32 27.3 30.2 27.3 H3 Q0.9 27.3 1.6 25.3 L6 11.8 Q6.6 10.2 8.2 10.2 Z" fill="url(#gFolderOpen)" stroke="#c7741e" stroke-width="0.9"/><path d="M2.8 25.6 L7 12.6 Q7.4 11.4 8.8 11.4 H36" fill="none" stroke="#fff0cc" stroke-width="0.9" opacity="0.9"/></svg>
<div class="t" style="left:117.0px;width:97.3px;overflow:hidden;transform:scaleX(1.018);transform-origin:0 50%;top:215.0px;height:24px;line-height:24px;color:#3c3c3c"><span class="k">ಮಾಡ್ಯೂಲ್‌ಗಳು</span></div>
<svg style="position:absolute;left:83px;top:259.25px" width="18" height="18" viewBox="0 0 18 18" ><g transform="translate(9 9)"><circle r="7.5" fill="#fff" fill-opacity="0.6" stroke="#3d3d3d" stroke-width="1.1"/><path d="M-2.6 -2.6 L2.6 2.6 M2.8 -1.6 V2.8 H-1.6" fill="none" stroke="#3d3d3d" stroke-width="1.4000000000000001"/></g></svg>
<svg style="position:absolute;left:116.5px;top:253.75px" width="38" height="28" viewBox="0 0 38 28" ><path d="M1.2 25 V3.5 Q1.2 1 3.8 1 H11 Q12.6 1 13.4 2.4 L14.6 4.4 H29.5 Q32 4.4 32 7 V11 H8 L3 26 Z" fill="url(#gFolderBack)" stroke="#d9a045" stroke-width="0.9"/><path d="M8.2 10.2 H35.6 Q37.8 10.2 37.1 12.4 L32.6 25.6 Q32 27.3 30.2 27.3 H3 Q0.9 27.3 1.6 25.3 L6 11.8 Q6.6 10.2 8.2 10.2 Z" fill="url(#gFolderOpen)" stroke="#c7741e" stroke-width="0.9"/><path d="M2.8 25.6 L7 12.6 Q7.4 11.4 8.8 11.4 H36" fill="none" stroke="#fff0cc" stroke-width="0.9" opacity="0.9"/></svg>
<div class="t" style="left:161.0px;width:33.7px;overflow:hidden;transform:scaleX(1.103);transform-origin:0 50%;top:258.75px;height:24px;line-height:24px;color:#3c3c3c"><span class="k">ಸಂಸ್ಥೆ</span></div>
<svg style="position:absolute;left:164px;top:294.0px" width="30.5" height="34" viewBox="0 0 30 34" ><rect x="0.5" y="1" width="29" height="32.5" rx="2.2" fill="#24335a"/><rect x="5" y="1.2" width="24" height="3.2" fill="#f2f6fb"/><rect x="6.2" y="3.2" width="23.3" height="29.3" rx="1.6" fill="url(#gBookCover)" stroke="#4f86c8" stroke-width="0.9"/><rect x="0.5" y="1" width="6.5" height="32.5" rx="2.2" fill="url(#gBookSpine)"/><path d="M2.6 1 H28 a1.5 1.5 0 0 1 1.5 1.5" fill="none" stroke="#6e83b3" stroke-width="0.8"/></svg>
<div class="t" style="left:204.5px;width:57.5px;overflow:hidden;transform:scaleX(1.033);transform-origin:0 50%;top:302.5px;height:24px;line-height:24px;color:#3c3c3c"><span class="k">ಗ್ರಾಹಕರು</span></div>
<svg style="position:absolute;left:164px;top:337.75px" width="30.5" height="34" viewBox="0 0 30 34" ><rect x="0.5" y="1" width="29" height="32.5" rx="2.2" fill="#24335a"/><rect x="5" y="1.2" width="24" height="3.2" fill="#f2f6fb"/><rect x="6.2" y="3.2" width="23.3" height="29.3" rx="1.6" fill="url(#gBookCover)" stroke="#4f86c8" stroke-width="0.9"/><rect x="0.5" y="1" width="6.5" height="32.5" rx="2.2" fill="url(#gBookSpine)"/><path d="M2.6 1 H28 a1.5 1.5 0 0 1 1.5 1.5" fill="none" stroke="#6e83b3" stroke-width="0.8"/></svg>
<div class="t" style="left:204.5px;width:64.1px;overflow:hidden;transform:scaleX(1.094);transform-origin:0 50%;top:346.25px;height:24px;line-height:24px;color:#3c3c3c"><span class="k">ಪ್ರತಿಜ್ಞೆಗಳು</span></div>
<svg style="position:absolute;left:164px;top:381.5px" width="30.5" height="34" viewBox="0 0 30 34" ><rect x="0.5" y="1" width="29" height="32.5" rx="2.2" fill="#24335a"/><rect x="5" y="1.2" width="24" height="3.2" fill="#f2f6fb"/><rect x="6.2" y="3.2" width="23.3" height="29.3" rx="1.6" fill="url(#gBookCover)" stroke="#4f86c8" stroke-width="0.9"/><rect x="0.5" y="1" width="6.5" height="32.5" rx="2.2" fill="url(#gBookSpine)"/><path d="M2.6 1 H28 a1.5 1.5 0 0 1 1.5 1.5" fill="none" stroke="#6e83b3" stroke-width="0.8"/></svg>
<div class="t" style="left:204.5px;width:61.3px;overflow:hidden;transform:scaleX(0.954);transform-origin:0 50%;top:390.0px;height:24px;line-height:24px;color:#3c3c3c"><span class="k">ಮೇಲಿಂಗ್</span></div>
<div style="left:201.5px;top:421px;width:140px;height:44px;background:#b5b5b5"></div>
<svg style="position:absolute;left:164px;top:425.25px" width="30.5" height="34" viewBox="0 0 30 34" ><rect x="0.5" y="1" width="29" height="32.5" rx="2.2" fill="#24335a"/><rect x="5" y="1.2" width="24" height="3.2" fill="#f2f6fb"/><rect x="6.2" y="3.2" width="23.3" height="29.3" rx="1.6" fill="url(#gBookCover)" stroke="#4f86c8" stroke-width="0.9"/><rect x="0.5" y="1" width="6.5" height="32.5" rx="2.2" fill="url(#gBookSpine)"/><path d="M2.6 1 H28 a1.5 1.5 0 0 1 1.5 1.5" fill="none" stroke="#6e83b3" stroke-width="0.8"/></svg>
<div class="t" style="left:204.5px;width:58.0px;overflow:hidden;transform:scaleX(0.955);transform-origin:0 50%;top:433.75px;height:24px;line-height:24px;color:#fff"><span class="k">ಸಾಲಗಳು</span></div>
<svg style="position:absolute;left:164px;top:469.0px" width="30.5" height="34" viewBox="0 0 30 34" ><rect x="0.5" y="1" width="29" height="32.5" rx="2.2" fill="#24335a"/><rect x="5" y="1.2" width="24" height="3.2" fill="#f2f6fb"/><rect x="6.2" y="3.2" width="23.3" height="29.3" rx="1.6" fill="url(#gBookCover)" stroke="#4f86c8" stroke-width="0.9"/><rect x="0.5" y="1" width="6.5" height="32.5" rx="2.2" fill="url(#gBookSpine)"/><path d="M2.6 1 H28 a1.5 1.5 0 0 1 1.5 1.5" fill="none" stroke="#6e83b3" stroke-width="0.8"/></svg>
<div class="t" style="left:204.5px;width:27.5px;overflow:hidden;transform:scaleX(1.021);transform-origin:0 50%;top:477.5px;height:24px;line-height:24px;color:#3c3c3c"><span class="k">ಹಣ</span></div>
<svg style="position:absolute;left:39px;top:521.75px" width="18" height="18" viewBox="0 0 18 18" ><g transform="translate(9 9)"><circle r="7.5" fill="#fff" fill-opacity="0.6" stroke="#a9b0ae" stroke-width="1.1"/><path d="M-4 0 H3.6 M0.6 -3.2 L3.8 0 L0.6 3.2" fill="none" stroke="#a9b0ae" stroke-width="1.3"/></g></svg>
<svg style="position:absolute;left:72px;top:516.75px" width="34" height="28" viewBox="0 0 32 27" ><path d="M1 4 Q1 1.2 3.8 1.2 H11.5 L14 4.6 H28.5 Q31 4.6 31 7 V12 H1 Z" fill="url(#gFolderBack)" stroke="#e0a040" stroke-width="0.8"/><rect x="0.8" y="8.2" width="30.4" height="18" rx="2" fill="url(#gFolderFront)" stroke="#cf7a1e" stroke-width="0.9"/><path d="M2 9.6 H30" stroke="#ffe9b8" stroke-width="1"/></svg>
<div class="t" style="left:117.0px;width:73.9px;overflow:hidden;transform:scaleX(1.039);transform-origin:0 50%;top:521.75px;height:24px;line-height:24px;color:#3c3c3c"><span class="k">ಡೈರೆಕ್ಟರಿಗಳು</span></div>
<svg style="position:absolute;left:39px;top:565.5px" width="18" height="18" viewBox="0 0 18 18" ><g transform="translate(9 9)"><circle r="7.5" fill="#fff" fill-opacity="0.6" stroke="#a9b0ae" stroke-width="1.1"/><path d="M-4 0 H3.6 M0.6 -3.2 L3.8 0 L0.6 3.2" fill="none" stroke="#a9b0ae" stroke-width="1.3"/></g></svg>
<svg style="position:absolute;left:72px;top:560.5px" width="34" height="28" viewBox="0 0 32 27" ><path d="M1 4 Q1 1.2 3.8 1.2 H11.5 L14 4.6 H28.5 Q31 4.6 31 7 V12 H1 Z" fill="url(#gFolderBack)" stroke="#e0a040" stroke-width="0.8"/><rect x="0.8" y="8.2" width="30.4" height="18" rx="2" fill="url(#gFolderFront)" stroke="#cf7a1e" stroke-width="0.9"/><path d="M2 9.6 H30" stroke="#ffe9b8" stroke-width="1"/></svg>
<div class="t" style="left:117.0px;width:62.8px;overflow:hidden;transform:scaleX(1.028);transform-origin:0 50%;top:565.5px;height:24px;line-height:24px;color:#3c3c3c"><span class="k">ವರದಿಗಳು</span></div>
<svg style="position:absolute;left:313px;top:802px" width="17" height="17" viewBox="0 0 17 17" ><path d="M10.5 10.5 L15.5 15.5" stroke="#2a5fb8" stroke-width="3.2" stroke-linecap="round"/><circle cx="6.6" cy="6.6" r="4.8" fill="#fff" stroke="#2a6fc9" stroke-width="2.2"/></svg>
<div style="left:24px;top:833px;width:320px;height:41px;border:1px solid #c2c2c2;box-sizing:border-box;background:#fff"></div>
<div style="left:24px;top:875px;width:320px;height:1px;background:#cfcfcf"></div>
<svg style="position:absolute;left:29.5px;top:843px" width="18" height="19" viewBox="0 0 18 19" ><path d="M0.5 17 Q0.5 11.5 6 10.8 L9 10.5 L12 10.8 Q17.5 11.5 17.5 17 Q9 19.6 0.5 17 Z" fill="#8cc24c" stroke="#6a9a34" stroke-width="0.6"/><ellipse cx="9" cy="6.2" rx="4.2" ry="5" fill="url(#gSkin)"/><path d="M4.6 6 Q4 0.5 9 0.5 Q14 0.5 13.4 6 Q12.4 3 9 3.3 Q5.6 3 4.6 6 Z" fill="url(#gHair)"/></svg>
<div class="t" style="left:54.5px;width:102.7px;overflow:hidden;transform:scaleX(1.112);transform-origin:0 50%;top:843.5px;height:24px;line-height:24px;color:#a6a6a6"><span class="k">ತಾಂತ್ರಿಕ ಸಹಾಯ</span></div>
<div style="left:282px;top:849px;width:11px;height:9px;border:1px solid #8a8a8a;border-top-width:2px;box-sizing:border-box"></div>
<svg style="position:absolute;left:319px;top:848px" width="9" height="11.5" viewBox="0 0 9 11.5" ><path d="M2 0.6 H7.2" stroke="#8a8a8a" stroke-width="1.2"/><rect x="2.6" y="0.6" width="4" height="5.6" fill="#a8a8a8" stroke="#8a8a8a" stroke-width="0.9"/><path d="M5.4 1 V6" stroke="#777" stroke-width="1.2"/><path d="M0.4 6.4 H8.8 M4.6 6.6 V11" fill="none" stroke="#8a8a8a" stroke-width="1.2"/></svg>
<div style="left:354px;top:176px;width:1px;height:21px;background:#c9c9c9"></div>
<div style="left:356px;top:176px;width:1px;height:21px;background:#c9c9c9"></div>
<svg style="position:absolute;left:368.5px;top:167px" width="31" height="38" viewBox="0 0 30 37" ><rect x="0.7" y="0.7" width="28.6" height="35.6" fill="#f3f6fc" stroke="#a9b2dc" stroke-width="1.3"/><rect x="4.5" y="4.5" width="21" height="6" fill="#9fcdf0" stroke="#6fa8dc" stroke-width="0.8"/><path d="M4.5 14.5 H25.5 M4.5 18.5 H12 M4.5 22.5 H12 M4.5 26.5 H12 M4.5 30.5 H12" stroke="#8fa8d8" stroke-width="1.3"/><rect x="14" y="20" width="5" height="13" fill="#6fb0e6" stroke="#4a8cc8" stroke-width="0.6"/><rect x="20" y="16" width="5" height="17" fill="#f5b460" stroke="#d08a30" stroke-width="0.6"/></svg>
<div class="t" style="left:409.0px;width:62.8px;overflow:hidden;transform:scaleX(1.028);transform-origin:0 50%;top:175.6px;height:24px;line-height:24px;color:#3c3c3c"><span class="k">ವರದಿಗಳು</span></div>
<svg style="position:absolute;left:478px;top:184px" width="7" height="4" viewBox="0 0 7 4" ><path d="M0 0 H7 L3.5 4 Z" fill="#333"/></svg>
<svg style="position:absolute;left:498.5px;top:168px" width="36" height="36" viewBox="0 0 36 36" ><circle cx="18" cy="18" r="17.2" fill="url(#gGreenBall)" stroke="#7eb33a" stroke-width="1.2"/><path d="M9.5 14.4 H18.4 V9.6 L27.6 18 L18.4 26.4 V21.6 H9.5 Z" fill="#fff" stroke="#5f9a28" stroke-width="1.1" stroke-linejoin="round"/></svg>
<div class="t" style="left:542.0px;width:60.0px;overflow:hidden;transform:scaleX(1.060);transform-origin:0 50%;top:175.6px;height:24px;line-height:24px;color:#3c3c3c"><span class="k">ಕ್ರಿಯೆಗಳು</span></div>
<svg style="position:absolute;left:608px;top:184px" width="7" height="4" viewBox="0 0 7 4" ><path d="M0 0 H7 L3.5 4 Z" fill="#333"/></svg>
<div style="left:627px;top:164px;width:1px;height:44px;background:#c0c0c0"></div>
<svg style="position:absolute;left:636.5px;top:167.0px" width="37" height="37" viewBox="0 0 37 37" ><circle cx="18.5" cy="18.5" r="16.4" fill="url(#gClock)" stroke="#e68a86" stroke-width="3.4"/><circle cx="18.5" cy="18.5" r="18" fill="none" stroke="#cf6c68" stroke-width="0.8"/><circle cx="18.5" cy="18.5" r="14.4" fill="none" stroke="#b0b8c0" stroke-width="0.7"/><path d="M18.5 19 L27.5 9.5" stroke="#6a7078" stroke-width="1.6"/><path d="M18.5 19 V32" stroke="#6a7078" stroke-width="1.8"/><path d="M18.5 19 H7" stroke="#d04a4a" stroke-width="1.3"/><circle cx="18.5" cy="19" r="1.6" fill="#555"/><path d="M18.5 5 V7 M32 18.5 H30 M5 18.5 H7 M18.5 32 V30" stroke="#8a9098" stroke-width="1"/></svg>
<svg style="position:absolute;left:1405.7px;top:177px" width="18" height="18" viewBox="0 0 18 18" ><g transform="translate(9 9)"><circle r="7.5" fill="#fff" fill-opacity="0.6" stroke="#c2c2c2" stroke-width="1.1"/><path d="M-2.6 -2.6 L2.6 2.6 M2.8 -1.6 V2.8 H-1.6" fill="none" stroke="#c2c2c2" stroke-width="1.4000000000000001"/></g></svg>
<div style="left:347px;top:216px;width:1085px;height:392px;border:1px solid #d0d0d0;box-sizing:border-box;background:#fff"></div>
<div class="t" style="left:358.0px;width:384.1px;overflow:hidden;transform:scaleX(1.017);transform-origin:0 50%;top:229.5px;height:24px;line-height:24px;color:#b2b2b2"><span class="k">ಅದರ ಮೂಲಕ ಗುಂಪು ಮಾಡಲು ಕಾಲಮ್ ಅನ್ನು ಇಲ್ಲಿಗೆ ಎಳೆಯಿರಿ</span></div>
<div style="left:348px;top:260px;width:1083px;height:2px;background:#c2c2c2"></div>
<div style="left:348px;top:262px;width:1040px;height:43px;background:#f5f5f5"></div>
<div style="left:348px;top:304px;width:1040px;height:1px;background:#c6c6c6"></div>
<div style="left:1387px;top:262px;width:1px;height:261px;background:#c6c6c6"></div>
<div style="left:362px;top:262px;width:1px;height:43px;background:#c6c6c6"></div>
<div style="left:558px;top:262px;width:1px;height:43px;background:#c6c6c6"></div>
<div style="left:707px;top:262px;width:1px;height:43px;background:#c6c6c6"></div>
<div style="left:859px;top:262px;width:1px;height:43px;background:#c6c6c6"></div>
<div style="left:996px;top:262px;width:1px;height:43px;background:#c6c6c6"></div>
<div style="left:1101px;top:262px;width:1px;height:43px;background:#c6c6c6"></div>
<div style="left:1262px;top:262px;width:1px;height:43px;background:#c6c6c6"></div>
<div class="t" style="left:366.0px;width:23.7px;overflow:hidden;transform:scaleX(0.969);transform-origin:0 50%;top:273.5px;height:24px;line-height:24px;color:#3c3c3c"><span class="k">ಸ್ಥಿತಿ</span></div>
<svg style="position:absolute;left:527.5px;top:274px" width="20" height="20" viewBox="0 0 20 20" ><circle cx="10" cy="10" r="8.7" fill="#fbfbfb" stroke="#c6c6c6" stroke-width="1"/><path d="M5.2 6.2 H14.8 L11 10.6 V15 L9 13.8 V10.6 Z" fill="#e9e9e9" stroke="#b4b4b4" stroke-width="0.9" stroke-linejoin="round"/></svg>
<div class="t" style="left:562.0px;width:70.6px;overflow:hidden;transform:scaleX(1.032);transform-origin:0 50%;top:273.5px;height:24px;line-height:24px;color:#3c3c3c"><span class="k">ವ್ಯವಸ್ಥಾಪಕ</span></div>
<svg style="position:absolute;left:676.5px;top:274px" width="20" height="20" viewBox="0 0 20 20" ><circle cx="10" cy="10" r="8.7" fill="#fbfbfb" stroke="#c6c6c6" stroke-width="1"/><path d="M5.2 6.2 H14.8 L11 10.6 V15 L9 13.8 V10.6 Z" fill="#e9e9e9" stroke="#b4b4b4" stroke-width="0.9" stroke-linejoin="round"/></svg>
<div class="t" style="left:711.0px;width:89.2px;overflow:hidden;transform:scaleX(1.067);transform-origin:0 50%;top:273.5px;height:24px;line-height:24px;color:#3c3c3c"><span class="k">ಒಪ್ಪಂದ ಸಂಖ್ಯೆ</span></div>
<svg style="position:absolute;left:828.5px;top:274px" width="20" height="20" viewBox="0 0 20 20" ><circle cx="10" cy="10" r="8.7" fill="#fbfbfb" stroke="#c6c6c6" stroke-width="1"/><path d="M5.2 6.2 H14.8 L11 10.6 V15 L9 13.8 V10.6 Z" fill="#e9e9e9" stroke="#b4b4b4" stroke-width="0.9" stroke-linejoin="round"/></svg>
<div class="t" style="left:863.0px;width:60.0px;overflow:hidden;transform:scaleX(1.095);transform-origin:0 50%;top:268.0px;height:18px;line-height:18px;color:#3c3c3c"><span class="k">ಒಪ್ಪಂದದ</span></div>
<div class="t" style="left:863.0px;width:48.7px;overflow:hidden;transform:scaleX(1.081);transform-origin:0 50%;top:283.5px;height:18px;line-height:18px;color:#3c3c3c"><span class="k">ದಿನಾಂಕ</span></div>
<svg style="position:absolute;left:965.5px;top:274px" width="20" height="20" viewBox="0 0 20 20" ><circle cx="10" cy="10" r="8.7" fill="#fbfbfb" stroke="#c6c6c6" stroke-width="1"/><path d="M5.2 6.2 H14.8 L11 10.6 V15 L9 13.8 V10.6 Z" fill="#e9e9e9" stroke="#b4b4b4" stroke-width="0.9" stroke-linejoin="round"/></svg>
<div class="t" style="left:1000.0px;width:41.5px;overflow:hidden;transform:scaleX(1.059);transform-origin:0 50%;top:273.5px;height:24px;line-height:24px;color:#3c3c3c"><span class="k">ಗ್ರಾಹಕ</span></div>
<svg style="position:absolute;left:1070.5px;top:274px" width="20" height="20" viewBox="0 0 20 20" ><circle cx="10" cy="10" r="8.7" fill="#fbfbfb" stroke="#c6c6c6" stroke-width="1"/><path d="M5.2 6.2 H14.8 L11 10.6 V15 L9 13.8 V10.6 Z" fill="#e9e9e9" stroke="#b4b4b4" stroke-width="0.9" stroke-linejoin="round"/></svg>
<div class="t" style="left:1105.0px;top:273.5px;height:24px;line-height:24px;color:#3c3c3c">% </div>
<div class="t" style="left:1120.8px;width:23.6px;overflow:hidden;transform:scaleX(1.086);transform-origin:0 50%;top:273.5px;height:24px;line-height:24px;color:#3c3c3c"><span class="k">ದರ</span></div>
<svg style="position:absolute;left:1231.5px;top:274px" width="20" height="20" viewBox="0 0 20 20" ><circle cx="10" cy="10" r="8.7" fill="#fbfbfb" stroke="#c6c6c6" stroke-width="1"/><path d="M5.2 6.2 H14.8 L11 10.6 V15 L9 13.8 V10.6 Z" fill="#e9e9e9" stroke="#b4b4b4" stroke-width="0.9" stroke-linejoin="round"/></svg>
<div class="t" style="left:1266.0px;width:65.3px;overflow:hidden;transform:scaleX(0.997);transform-origin:0 50%;top:273.5px;height:24px;line-height:24px;color:#3c3c3c"><span class="k">ಸಾಲ ಸಾಲ</span></div>
<svg style="position:absolute;left:1357.5px;top:274px" width="20" height="20" viewBox="0 0 20 20" ><circle cx="10" cy="10" r="8.7" fill="#fbfbfb" stroke="#c6c6c6" stroke-width="1"/><path d="M5.2 6.2 H14.8 L11 10.6 V15 L9 13.8 V10.6 Z" fill="#e9e9e9" stroke="#b4b4b4" stroke-width="0.9" stroke-linejoin="round"/></svg>
<div style="left:348px;top:305px;width:14px;height:219px;background:#f5f5f5"></div>
<div style="left:362px;top:305px;width:1px;height:219px;background:#c6c6c6"></div>
<div style="left:363px;top:305px;width:1024px;height:42px;background:#ffd1cf"></div>
<div style="left:348px;top:347px;width:1040px;height:1px;background:#c6c6c6"></div>
<div class="t dark" style="left:399.5px;width:93.0px;overflow:hidden;transform:scaleX(0.978);transform-origin:0 50%;top:315.5px;height:24px;line-height:24px;color:#151515"><span class="k">ಅವಧಿ ಮೀರಿದೆ</span></div>
<div class="t dark" style="left:562.0px;width:65.7px;overflow:hidden;transform:scaleX(0.957);transform-origin:0 50%;top:315.5px;height:24px;line-height:24px;color:#151515"><span class="k">ಉದ್ಯೋಗಿ</span></div>
<div class="t dark" style="left:623.4px;top:315.5px;height:24px;line-height:24px;color:#151515"> 1</div>
<div class="t dark" style="left:711.0px;top:315.5px;height:24px;line-height:24px;color:#151515">0008</div>
<div class="t dark" style="left:863.0px;top:315.5px;height:24px;line-height:24px;color:#151515;letter-spacing:0.32px">06.11.2021</div>
<div class="t dark" style="left:1000.0px;width:43.3px;overflow:hidden;transform:scaleX(1.014);transform-origin:0 50%;top:315.5px;height:24px;line-height:24px;color:#151515"><span class="k">ಗ್ರಾಹಕ</span></div>
<div class="t dark" style="left:1042.4px;top:315.5px;height:24px;line-height:24px;color:#151515"> 1</div>
<div class="t dark" style="left:1105.0px;width:49.9px;overflow:hidden;transform:scaleX(0.991);transform-origin:0 50%;top:315.5px;height:24px;line-height:24px;color:#151515"><span class="k">ಪ್ರತಿದಿನ</span></div>
<div class="t dark" style="left:1153.0px;top:315.5px;height:24px;line-height:24px;color:#151515"> 0,5%</div>
<div class="t dark" style="right:69px;top:315.5px;height:24px;line-height:24px;text-align:right;color:#151515">50 000.00</div>
<div style="left:363px;top:348px;width:1024px;height:43px;background:#defbe3"></div>
<div style="left:348px;top:391px;width:1040px;height:1px;background:#c6c6c6"></div>
<div class="t" style="left:399.5px;width:151.5px;overflow:hidden;transform:scaleX(0.990);transform-origin:0 50%;top:359.0px;height:24px;line-height:24px;color:#b4b4b4"><span class="k">ಕಾರ್ಯಗತಗೊಳಿಸಲಾಗಿದೆ</span></div>
<div class="t" style="left:562.0px;width:63.2px;overflow:hidden;transform:scaleX(0.994);transform-origin:0 50%;top:359.0px;height:24px;line-height:24px;color:#b4b4b4"><span class="k">ಉದ್ಯೋಗಿ</span></div>
<div class="t" style="left:623.4px;top:359.0px;height:24px;line-height:24px;color:#b4b4b4"> 1</div>
<div class="t" style="left:711.0px;top:359.0px;height:24px;line-height:24px;color:#b4b4b4">0012</div>
<div class="t" style="left:863.0px;top:359.0px;height:24px;line-height:24px;color:#b4b4b4;letter-spacing:0.32px">18.02.2021</div>
<div class="t" style="left:1000.0px;width:41.5px;overflow:hidden;transform:scaleX(1.059);transform-origin:0 50%;top:359.0px;height:24px;line-height:24px;color:#b4b4b4"><span class="k">ಗ್ರಾಹಕ</span></div>
<div class="t" style="left:1042.4px;top:359.0px;height:24px;line-height:24px;color:#b4b4b4"> 5</div>
<div class="t" style="left:1105.0px;width:50.8px;overflow:hidden;transform:scaleX(0.900);transform-origin:0 50%;top:359.0px;height:24px;line-height:24px;color:#b4b4b4"><span class="k">ತಿಂಗಳಿಗೆ</span></div>
<div class="t" style="left:1149.4px;top:359.0px;height:24px;line-height:24px;color:#b4b4b4"> 10%</div>
<div class="t" style="right:69px;top:359.0px;height:24px;line-height:24px;text-align:right;color:#b4b4b4">10 000.00</div>
<div style="left:363px;top:392px;width:1024px;height:43px;background:#d9f1ff"></div>
<div style="left:348px;top:435px;width:1040px;height:1px;background:#c6c6c6"></div>
<div class="t" style="left:399.5px;width:151.5px;overflow:hidden;transform:scaleX(0.990);transform-origin:0 50%;top:403.0px;height:24px;line-height:24px;color:#b4b4b4"><span class="k">ಕಾರ್ಯಗತಗೊಳಿಸಲಾಗಿದೆ</span></div>
<div class="t" style="left:562.0px;width:63.2px;overflow:hidden;transform:scaleX(0.994);transform-origin:0 50%;top:403.0px;height:24px;line-height:24px;color:#b4b4b4"><span class="k">ಉದ್ಯೋಗಿ</span></div>
<div class="t" style="left:623.4px;top:403.0px;height:24px;line-height:24px;color:#b4b4b4"> 1</div>
<div class="t" style="left:711.0px;top:403.0px;height:24px;line-height:24px;color:#b4b4b4">0013</div>
<div class="t" style="left:863.0px;top:403.0px;height:24px;line-height:24px;color:#b4b4b4;letter-spacing:0.32px">19.02.2021</div>
<div class="t" style="left:1000.0px;width:41.5px;overflow:hidden;transform:scaleX(1.059);transform-origin:0 50%;top:403.0px;height:24px;line-height:24px;color:#b4b4b4"><span class="k">ಗ್ರಾಹಕ</span></div>
<div class="t" style="left:1042.4px;top:403.0px;height:24px;line-height:24px;color:#b4b4b4"> 3</div>
<div class="t" style="left:1105.0px;width:50.8px;overflow:hidden;transform:scaleX(0.900);transform-origin:0 50%;top:403.0px;height:24px;line-height:24px;color:#b4b4b4"><span class="k">ತಿಂಗಳಿಗೆ</span></div>
<div class="t" style="left:1149.4px;top:403.0px;height:24px;line-height:24px;color:#b4b4b4"> 10%</div>
<div class="t" style="right:69px;top:403.0px;height:24px;line-height:24px;text-align:right;color:#b4b4b4">30 000.00</div>
<div style="left:363px;top:436px;width:1024px;height:43px;background:#ffd1cf"></div>
<div style="left:348px;top:479px;width:1040px;height:1px;background:#c6c6c6"></div>
<div class="t dark" style="left:399.5px;width:93.0px;overflow:hidden;transform:scaleX(0.978);transform-origin:0 50%;top:447.0px;height:24px;line-height:24px;color:#151515"><span class="k">ಅವಧಿ ಮೀರಿದೆ</span></div>
<div class="t dark" style="left:562.0px;width:65.7px;overflow:hidden;transform:scaleX(0.957);transform-origin:0 50%;top:447.0px;height:24px;line-height:24px;color:#151515"><span class="k">ಉದ್ಯೋಗಿ</span></div>
<div class="t dark" style="left:623.4px;top:447.0px;height:24px;line-height:24px;color:#151515"> 1</div>
<div class="t dark" style="left:711.0px;top:447.0px;height:24px;line-height:24px;color:#151515">0010</div>
<div class="t dark" style="left:863.0px;top:447.0px;height:24px;line-height:24px;color:#151515;letter-spacing:0.32px">07.11.2020</div>
<div class="t dark" style="left:1000.0px;width:43.3px;overflow:hidden;transform:scaleX(1.014);transform-origin:0 50%;top:447.0px;height:24px;line-height:24px;color:#151515"><span class="k">ಗ್ರಾಹಕ</span></div>
<div class="t dark" style="left:1042.4px;top:447.0px;height:24px;line-height:24px;color:#151515"> 2</div>
<div class="t dark" style="left:1105.0px;width:49.9px;overflow:hidden;transform:scaleX(0.991);transform-origin:0 50%;top:447.0px;height:24px;line-height:24px;color:#151515"><span class="k">ಪ್ರತಿದಿನ</span></div>
<div class="t dark" style="left:1153.0px;top:447.0px;height:24px;line-height:24px;color:#151515"> 0,5%</div>
<div class="t dark" style="right:69px;top:447.0px;height:24px;line-height:24px;text-align:right;color:#151515">200.00</div>
<div style="left:363px;top:480px;width:1024px;height:43px;background:#ffff80"></div>
<div style="left:348px;top:523px;width:1040px;height:1px;background:#c6c6c6"></div>
<div class="t dark" style="left:399.5px;width:138.3px;overflow:hidden;transform:scaleX(1.052);transform-origin:0 50%;top:491.0px;height:24px;line-height:24px;color:#151515"><span class="k">ಹಣವನ್ನು ನೀಡಲಾಗಿಲ್ಲ</span></div>
<div class="t dark" style="left:562.0px;width:65.7px;overflow:hidden;transform:scaleX(0.957);transform-origin:0 50%;top:491.0px;height:24px;line-height:24px;color:#151515"><span class="k">ಉದ್ಯೋಗಿ</span></div>
<div class="t dark" style="left:623.4px;top:491.0px;height:24px;line-height:24px;color:#151515"> 1</div>
<div class="t dark" style="left:711.0px;top:491.0px;height:24px;line-height:24px;color:#151515">0011</div>
<div class="t dark" style="left:863.0px;top:491.0px;height:24px;line-height:24px;color:#151515;letter-spacing:0.32px">09.12.2020</div>
<div class="t dark" style="left:1000.0px;width:43.3px;overflow:hidden;transform:scaleX(1.014);transform-origin:0 50%;top:491.0px;height:24px;line-height:24px;color:#151515"><span class="k">ಗ್ರಾಹಕ</span></div>
<div class="t dark" style="left:1042.4px;top:491.0px;height:24px;line-height:24px;color:#151515"> 4</div>
<div class="t dark" style="left:1105.0px;width:52.6px;overflow:hidden;transform:scaleX(0.900);transform-origin:0 50%;top:491.0px;height:24px;line-height:24px;color:#151515"><span class="k">ತಿಂಗಳಿಗೆ</span></div>
<div class="t dark" style="left:1151.0px;top:491.0px;height:24px;line-height:24px;color:#151515"> 10%</div>
<div class="t dark" style="right:69px;top:491.0px;height:24px;line-height:24px;text-align:right;color:#151515">0.00</div>
<div style="left:362px;top:304px;width:1026px;height:44px;border:1px dotted #222;box-sizing:border-box"></div>
<svg style="position:absolute;left:352px;top:321px" width="5" height="10" viewBox="0 0 5 10" ><path d="M0 0 L5 5 L0 10 Z" fill="#444"/></svg>
<div style="left:348px;top:562px;width:1040px;height:44px;background:#f5f5f5;border-top:1px solid #c9c9c9;border-right:1px solid #c9c9c9;box-sizing:border-box"></div>
<div style="left:348px;top:605px;width:1040px;height:2px;background:#c2c2c2"></div>
<div style="left:1266px;top:565px;width:119px;height:38px;background:#fff;border:1px solid #cfcfcf;box-sizing:border-box"></div>
<div class="t" style="right:77px;top:573.5px;height:24px;line-height:24px;text-align:right;color:#3c3c3c">90 200.00</div>
<div style="left:878px;top:612px;width:20px;height:0px;border-top:1px dotted #9a9a9a"></div>
<div style="left:346.5px;top:663px;width:1085.5px;height:216px;border:1px solid #c6c6c6;border-left-width:1.5px;border-bottom:none;box-sizing:border-box;background:#fff"></div>
<div style="left:347px;top:619px;width:98px;height:45px;background:#fff;border-left:1px solid #c6c6c6;border-right:1px solid #c6c6c6;border-top:2px solid #1e9be6;box-sizing:border-box"></div>
<svg style="position:absolute;left:361.5px;top:632.5px" width="15.5" height="17.5" viewBox="0 0 15.5 17.5" ><rect x="0.3" y="0.6" width="15" height="16.6" rx="1.2" fill="#22315a"/><rect x="3" y="0.9" width="12" height="1.6" fill="#f4f8fc"/><rect x="3.4" y="2.4" width="11.8" height="14.2" rx="0.8" fill="url(#gBookCoverS)" stroke="#3f78c0" stroke-width="0.7"/><rect x="0.3" y="0.6" width="3.4" height="16.6" rx="1.2" fill="url(#gBookSpine)"/></svg>
<div class="t" style="left:388.0px;width:37.3px;overflow:hidden;transform:scaleX(1.230);transform-origin:0 50%;top:633.0px;height:24px;line-height:24px;color:#1e9be6"><span class="k">ಪ್ರತಿಜ್ಞೆ</span></div>
<div style="left:445px;top:622px;width:133px;height:41px;background:#f5f5f5;border:1px solid #c9c9c9;border-bottom:none;box-sizing:border-box"></div>
<svg style="position:absolute;left:457px;top:634px" width="15.5" height="17.5" viewBox="0 0 15.5 17.5" ><rect x="0.3" y="0.6" width="15" height="16.6" rx="1.2" fill="#22315a"/><rect x="3" y="0.9" width="12" height="1.6" fill="#f4f8fc"/><rect x="3.4" y="2.4" width="11.8" height="14.2" rx="0.8" fill="url(#gBookCoverS)" stroke="#3f78c0" stroke-width="0.7"/><rect x="0.3" y="0.6" width="3.4" height="16.6" rx="1.2" fill="url(#gBookSpine)"/></svg>
<div class="t" style="left:483.0px;width:82.0px;overflow:hidden;transform:scaleX(1.031);transform-origin:0 50%;top:634.0px;height:24px;line-height:24px;color:#4a4a4a"><span class="k">ಸಾಲದ ಮೊತ್ತ</span></div>
<div style="left:579px;top:622px;width:129px;height:41px;background:#f5f5f5;border:1px solid #c9c9c9;border-bottom:none;box-sizing:border-box"></div>
<svg style="position:absolute;left:591px;top:634px" width="15.5" height="17.5" viewBox="0 0 15.5 17.5" ><rect x="0.3" y="0.6" width="15" height="16.6" rx="1.2" fill="#22315a"/><rect x="3" y="0.9" width="12" height="1.6" fill="#f4f8fc"/><rect x="3.4" y="2.4" width="11.8" height="14.2" rx="0.8" fill="url(#gBookCoverS)" stroke="#3f78c0" stroke-width="0.7"/><rect x="0.3" y="0.6" width="3.4" height="16.6" rx="1.2" fill="url(#gBookSpine)"/></svg>
<div class="t" style="left:617.0px;width:81.3px;overflow:hidden;transform:scaleX(0.985);transform-origin:0 50%;top:634.0px;height:24px;line-height:24px;color:#4a4a4a"><span class="k">ಸಂಚಯಗಳು</span></div>
<div style="left:709px;top:622px;width:84px;height:41px;background:#f5f5f5;border:1px solid #c9c9c9;border-bottom:none;box-sizing:border-box"></div>
<svg style="position:absolute;left:721px;top:634px" width="15.5" height="17.5" viewBox="0 0 15.5 17.5" ><rect x="0.3" y="0.6" width="15" height="16.6" rx="1.2" fill="#22315a"/><rect x="3" y="0.9" width="12" height="1.6" fill="#f4f8fc"/><rect x="3.4" y="2.4" width="11.8" height="14.2" rx="0.8" fill="url(#gBookCoverS)" stroke="#3f78c0" stroke-width="0.7"/><rect x="0.3" y="0.6" width="3.4" height="16.6" rx="1.2" fill="url(#gBookSpine)"/></svg>
<div class="t" style="left:747.0px;width:33.9px;overflow:hidden;transform:scaleX(1.050);transform-origin:0 50%;top:634.0px;height:24px;line-height:24px;color:#4a4a4a"><span class="k">ದಂಡ</span></div>
<div style="left:794px;top:622px;width:126px;height:41px;background:#f5f5f5;border:1px solid #c9c9c9;border-bottom:none;box-sizing:border-box"></div>
<svg style="position:absolute;left:806px;top:634px" width="15.5" height="17.5" viewBox="0 0 15.5 17.5" ><rect x="0.3" y="0.6" width="15" height="16.6" rx="1.2" fill="#22315a"/><rect x="3" y="0.9" width="12" height="1.6" fill="#f4f8fc"/><rect x="3.4" y="2.4" width="11.8" height="14.2" rx="0.8" fill="url(#gBookCoverS)" stroke="#3f78c0" stroke-width="0.7"/><rect x="0.3" y="0.6" width="3.4" height="16.6" rx="1.2" fill="url(#gBookSpine)"/></svg>
<div class="t" style="left:832.0px;width:76.6px;overflow:hidden;transform:scaleX(1.025);transform-origin:0 50%;top:634.0px;height:24px;line-height:24px;color:#4a4a4a"><span class="k">ಮರುಪಾವತಿ</span></div>
<div style="left:921px;top:622px;width:105px;height:41px;background:#f5f5f5;border:1px solid #c9c9c9;border-bottom:none;box-sizing:border-box"></div>
<svg style="position:absolute;left:933px;top:634px" width="15.5" height="17.5" viewBox="0 0 15.5 17.5" ><rect x="0.3" y="0.6" width="15" height="16.6" rx="1.2" fill="#22315a"/><rect x="3" y="0.9" width="12" height="1.6" fill="#f4f8fc"/><rect x="3.4" y="2.4" width="11.8" height="14.2" rx="0.8" fill="url(#gBookCoverS)" stroke="#3f78c0" stroke-width="0.7"/><rect x="0.3" y="0.6" width="3.4" height="16.6" rx="1.2" fill="url(#gBookSpine)"/></svg>
<div class="t" style="left:959.0px;width:55.1px;overflow:hidden;transform:scaleX(1.027);transform-origin:0 50%;top:634.0px;height:24px;line-height:24px;color:#4a4a4a"><span class="k">ವೆಚ್ಚಗಳು</span></div>
<div style="left:1027px;top:622px;width:103px;height:41px;background:#f5f5f5;border:1px solid #c9c9c9;border-bottom:none;box-sizing:border-box"></div>
<svg style="position:absolute;left:1039px;top:634px" width="15.5" height="17.5" viewBox="0 0 15.5 17.5" ><rect x="0.3" y="0.6" width="15" height="16.6" rx="1.2" fill="#22315a"/><rect x="3" y="0.9" width="12" height="1.6" fill="#f4f8fc"/><rect x="3.4" y="2.4" width="11.8" height="14.2" rx="0.8" fill="url(#gBookCoverS)" stroke="#3f78c0" stroke-width="0.7"/><rect x="0.3" y="0.6" width="3.4" height="16.6" rx="1.2" fill="url(#gBookSpine)"/></svg>
<div class="t" style="left:1065.0px;width:56.1px;overflow:hidden;transform:scaleX(0.989);transform-origin:0 50%;top:634.0px;height:24px;line-height:24px;color:#4a4a4a"><span class="k">ಮಾರಾಟ</span></div>
<div style="left:1131px;top:622px;width:120px;height:41px;background:#f5f5f5;border:1px solid #c9c9c9;border-bottom:none;box-sizing:border-box"></div>
<svg style="position:absolute;left:1143px;top:634px" width="15.5" height="17.5" viewBox="0 0 15.5 17.5" ><rect x="0.3" y="0.6" width="15" height="16.6" rx="1.2" fill="#22315a"/><rect x="3" y="0.9" width="12" height="1.6" fill="#f4f8fc"/><rect x="3.4" y="2.4" width="11.8" height="14.2" rx="0.8" fill="url(#gBookCoverS)" stroke="#3f78c0" stroke-width="0.7"/><rect x="0.3" y="0.6" width="3.4" height="16.6" rx="1.2" fill="url(#gBookSpine)"/></svg>
<div class="t" style="left:1169.0px;width:72.4px;overflow:hidden;transform:scaleX(0.988);transform-origin:0 50%;top:634.0px;height:24px;line-height:24px;color:#4a4a4a"><span class="k">ದಾಖಲೆಗಳು</span></div>
<div style="left:1252px;top:622px;width:81px;height:41px;background:#f5f5f5;border:1px solid #c9c9c9;border-bottom:none;box-sizing:border-box"></div>
<svg style="position:absolute;left:1264px;top:634px" width="15.5" height="17.5" viewBox="0 0 15.5 17.5" ><rect x="0.3" y="0.6" width="15" height="16.6" rx="1.2" fill="#22315a"/><rect x="3" y="0.9" width="12" height="1.6" fill="#f4f8fc"/><rect x="3.4" y="2.4" width="11.8" height="14.2" rx="0.8" fill="url(#gBookCoverS)" stroke="#3f78c0" stroke-width="0.7"/><rect x="0.3" y="0.6" width="3.4" height="16.6" rx="1.2" fill="url(#gBookSpine)"/></svg>
<div class="t" style="left:1290.0px;width:33.1px;overflow:hidden;transform:scaleX(0.996);transform-origin:0 50%;top:634.0px;height:24px;line-height:24px;color:#4a4a4a"><span class="k">ಕೆಲಸ</span></div>
<div style="left:350px;top:665px;width:1080px;height:211px;border:1px solid #d0d0d0;border-bottom:2px solid #c6c6c6;box-sizing:border-box;background:#fff"></div>
<div class="t" style="left:360.5px;width:384.1px;overflow:hidden;transform:scaleX(1.017);transform-origin:0 50%;top:678.0px;height:24px;line-height:24px;color:#b2b2b2"><span class="k">ಅದರ ಮೂಲಕ ಗುಂಪು ಮಾಡಲು ಕಾಲಮ್ ಅನ್ನು ಇಲ್ಲಿಗೆ ಎಳೆಯಿರಿ</span></div>
<div style="left:351px;top:709px;width:1078px;height:2px;background:#c2c2c2"></div>
<div style="left:351px;top:711px;width:836px;height:42px;background:#f5f5f5"></div>
<div style="left:351px;top:753px;width:837px;height:1px;background:#c6c6c6"></div>
<div style="left:364px;top:711px;width:1px;height:42px;background:#c6c6c6"></div>
<div style="left:512px;top:711px;width:1px;height:42px;background:#c6c6c6"></div>
<div style="left:724px;top:711px;width:1px;height:42px;background:#c6c6c6"></div>
<div style="left:936px;top:711px;width:1px;height:42px;background:#c6c6c6"></div>
<div style="left:1187px;top:711px;width:1px;height:42px;background:#c6c6c6"></div>
<div class="t" style="left:368.0px;width:23.7px;overflow:hidden;transform:scaleX(0.969);transform-origin:0 50%;top:722.0px;height:24px;line-height:24px;color:#3c3c3c"><span class="k">ಸ್ಥಿತಿ</span></div>
<svg style="position:absolute;left:481.5px;top:722px" width="20" height="20" viewBox="0 0 20 20" ><circle cx="10" cy="10" r="8.7" fill="#fbfbfb" stroke="#c6c6c6" stroke-width="1"/><path d="M5.2 6.2 H14.8 L11 10.6 V15 L9 13.8 V10.6 Z" fill="#e9e9e9" stroke="#b4b4b4" stroke-width="0.9" stroke-linejoin="round"/></svg>
<div class="t" style="left:516.0px;width:108.4px;overflow:hidden;transform:scaleX(1.001);transform-origin:0 50%;top:722.0px;height:24px;line-height:24px;color:#3c3c3c"><span class="k">ಮೇಲಾಧಾರ ವಸ್ತು</span></div>
<svg style="position:absolute;left:693.5px;top:722px" width="20" height="20" viewBox="0 0 20 20" ><circle cx="10" cy="10" r="8.7" fill="#fbfbfb" stroke="#c6c6c6" stroke-width="1"/><path d="M5.2 6.2 H14.8 L11 10.6 V15 L9 13.8 V10.6 Z" fill="#e9e9e9" stroke="#b4b4b4" stroke-width="0.9" stroke-linejoin="round"/></svg>
<div class="t" style="left:728.0px;width:129.0px;overflow:hidden;transform:scaleX(1.043);transform-origin:0 50%;top:722.0px;height:24px;line-height:24px;color:#3c3c3c"><span class="k">ಮೌಲ್ಯಮಾಪನ ಮೊತ್ತ</span></div>
<svg style="position:absolute;left:905.5px;top:722px" width="20" height="20" viewBox="0 0 20 20" ><circle cx="10" cy="10" r="8.7" fill="#fbfbfb" stroke="#c6c6c6" stroke-width="1"/><path d="M5.2 6.2 H14.8 L11 10.6 V15 L9 13.8 V10.6 Z" fill="#e9e9e9" stroke="#b4b4b4" stroke-width="0.9" stroke-linejoin="round"/></svg>
<div class="t" style="left:940.0px;width:104.3px;overflow:hidden;transform:scaleX(1.031);transform-origin:0 50%;top:716.5px;height:18px;line-height:18px;color:#3c3c3c"><span class="k">ಮೇಲಾಧಾರವನ್ನು</span></div>
<div class="t" style="left:940.0px;width:121.9px;overflow:hidden;transform:scaleX(1.013);transform-origin:0 50%;top:732.0px;height:18px;line-height:18px;color:#3c3c3c"><span class="k">ಕಂಡುಹಿಡಿಯುವುದು</span></div>
<svg style="position:absolute;left:1156.5px;top:722px" width="20" height="20" viewBox="0 0 20 20" ><circle cx="10" cy="10" r="8.7" fill="#fbfbfb" stroke="#c6c6c6" stroke-width="1"/><path d="M5.2 6.2 H14.8 L11 10.6 V15 L9 13.8 V10.6 Z" fill="#e9e9e9" stroke="#b4b4b4" stroke-width="0.9" stroke-linejoin="round"/></svg>
<div style="left:351px;top:754px;width:13px;height:43px;background:#f5f5f5"></div>
<div style="left:364px;top:754px;width:1px;height:43px;background:#c6c6c6"></div>
<div style="left:365px;top:754px;width:823px;height:43px;background:#b0fc62"></div>
<div style="left:351px;top:797px;width:837px;height:1px;background:#c6c6c6"></div>
<svg style="position:absolute;left:355px;top:770.5px" width="5" height="10" viewBox="0 0 5 10" ><path d="M0 0 L5 5 L0 10 Z" fill="#444"/></svg>
<div class="t dark" style="left:401.5px;width:51.5px;overflow:hidden;transform:scaleX(0.980);transform-origin:0 50%;top:764.0px;height:24px;line-height:24px;color:#151515"><span class="k">ವಾಗ್ದಾನ</span></div>
<div class="t" style="right:519px;top:764.0px;height:24px;line-height:24px;text-align:right;color:#151515">150 000.00</div>
<div class="t dark" style="left:940.0px;width:52.5px;overflow:hidden;transform:scaleX(1.225);transform-origin:0 50%;top:764.0px;height:24px;line-height:24px;color:#151515"><span class="k">ಕ್ಯೆಂಟ್ರಲ್ಲಿ</span></div>
<div style="left:351px;top:829px;width:837px;height:46px;background:#f5f5f5;border-top:1px solid #c9c9c9;border-right:1px solid #c9c9c9;box-sizing:border-box"></div>
<div style="left:728px;top:833px;width:207px;height:38px;background:#fff;border:1px solid #cfcfcf;box-sizing:border-box"></div>
<div class="t" style="right:526px;top:841.5px;height:24px;line-height:24px;text-align:right;color:#3c3c3c">150 000.00</div>
<div style="left:24px;top:878px;width:1408px;height:2px;background:#c4c4c4"></div>
<div style="left:700px;top:882px;width:732px;height:1.5px;background:#c8c8c8"></div>
<div style="left:24px;top:880px;width:511px;height:52px;background:#f5f5f5;border-bottom:1px solid #c4c4c4;border-left:1px solid #c4c4c4;box-sizing:border-box"></div>
<svg style="position:absolute;left:40px;top:888.5px" width="30" height="34" viewBox="0 0 30 34" ><rect x="0.5" y="1" width="29" height="32.5" rx="2.2" fill="#24335a"/><rect x="5" y="1.2" width="24" height="3.2" fill="#f2f6fb"/><rect x="6.2" y="3.2" width="23.3" height="29.3" rx="1.6" fill="url(#gBookCover)" stroke="#4f86c8" stroke-width="0.9"/><rect x="0.5" y="1" width="6.5" height="32.5" rx="2.2" fill="url(#gBookSpine)"/><path d="M2.6 1 H28 a1.5 1.5 0 0 1 1.5 1.5" fill="none" stroke="#6e83b3" stroke-width="0.8"/></svg>
<div class="t" style="left:82.5px;width:57.5px;overflow:hidden;transform:scaleX(1.033);transform-origin:0 50%;top:895.5px;height:24px;line-height:24px;color:#666"><span class="k">ಗ್ರಾಹಕರು</span></div>
<div style="left:155px;top:896.5px;width:19px;height:19px;background:#fff"></div>
<svg style="position:absolute;left:159.5px;top:901px" width="10" height="10" viewBox="0 0 10 10" ><path d="M1 1 L9 9 M9 1 L1 9" stroke="#1e9be6" stroke-width="1.9"/></svg>
<div style="left:190.5px;top:880px;width:2px;height:51px;background:#b4b4b4"></div>
<svg style="position:absolute;left:207.5px;top:888.5px" width="30" height="34" viewBox="0 0 30 34" ><rect x="0.5" y="1" width="29" height="32.5" rx="2.2" fill="#24335a"/><rect x="5" y="1.2" width="24" height="3.2" fill="#f2f6fb"/><rect x="6.2" y="3.2" width="23.3" height="29.3" rx="1.6" fill="url(#gBookCover)" stroke="#4f86c8" stroke-width="0.9"/><rect x="0.5" y="1" width="6.5" height="32.5" rx="2.2" fill="url(#gBookSpine)"/><path d="M2.6 1 H28 a1.5 1.5 0 0 1 1.5 1.5" fill="none" stroke="#6e83b3" stroke-width="0.8"/></svg>
<div class="t" style="left:250.0px;width:64.1px;overflow:hidden;transform:scaleX(1.094);transform-origin:0 50%;top:895.5px;height:24px;line-height:24px;color:#666"><span class="k">ಪ್ರತಿಜ್ಞೆಗಳು</span></div>
<div style="left:333px;top:896.5px;width:19px;height:19px;background:#fff"></div>
<svg style="position:absolute;left:337.5px;top:901px" width="10" height="10" viewBox="0 0 10 10" ><path d="M1 1 L9 9 M9 1 L1 9" stroke="#1e9be6" stroke-width="1.9"/></svg>
<div style="left:367.5px;top:880px;width:2px;height:51px;background:#b4b4b4"></div>
<svg style="position:absolute;left:385px;top:888.5px" width="30" height="34" viewBox="0 0 30 34" ><rect x="0.5" y="1" width="29" height="32.5" rx="2.2" fill="#24335a"/><rect x="5" y="1.2" width="24" height="3.2" fill="#f2f6fb"/><rect x="6.2" y="3.2" width="23.3" height="29.3" rx="1.6" fill="url(#gBookCover)" stroke="#4f86c8" stroke-width="0.9"/><rect x="0.5" y="1" width="6.5" height="32.5" rx="2.2" fill="url(#gBookSpine)"/><path d="M2.6 1 H28 a1.5 1.5 0 0 1 1.5 1.5" fill="none" stroke="#6e83b3" stroke-width="0.8"/></svg>
<div class="t" style="left:428.0px;width:61.3px;overflow:hidden;transform:scaleX(0.954);transform-origin:0 50%;top:895.5px;height:24px;line-height:24px;color:#666"><span class="k">ಮೇಲಿಂಗ್</span></div>
<div style="left:499px;top:896.5px;width:19px;height:19px;background:#fff"></div>
<svg style="position:absolute;left:503.5px;top:901px" width="10" height="10" viewBox="0 0 10 10" ><path d="M1 1 L9 9 M9 1 L1 9" stroke="#1e9be6" stroke-width="1.9"/></svg>
<div style="left:534px;top:879.5px;width:166.5px;height:54.5px;background:#fff;border-left:1px solid #c0c0c0;border-right:1.5px solid #b4b4b4;border-bottom:2px solid #1e9be6;box-sizing:border-box"></div>
<svg style="position:absolute;left:551px;top:890px" width="30.5" height="34" viewBox="0 0 30 34" ><rect x="0.5" y="1" width="29" height="32.5" rx="2.2" fill="#24335a"/><rect x="5" y="1.2" width="24" height="3.2" fill="#f2f6fb"/><rect x="6.2" y="3.2" width="23.3" height="29.3" rx="1.6" fill="url(#gBookCover)" stroke="#4f86c8" stroke-width="0.9"/><rect x="0.5" y="1" width="6.5" height="32.5" rx="2.2" fill="url(#gBookSpine)"/><path d="M2.6 1 H28 a1.5 1.5 0 0 1 1.5 1.5" fill="none" stroke="#6e83b3" stroke-width="0.8"/></svg>
<div class="t" style="left:595.0px;width:58.0px;overflow:hidden;transform:scaleX(0.955);transform-origin:0 50%;top:897.0px;height:24px;line-height:24px;color:#1e9be6"><span class="k">ಸಾಲಗಳು</span></div>
<svg style="position:absolute;left:668.5px;top:902.5px" width="10" height="10" viewBox="0 0 10 10" ><path d="M1 1 L9 9 M9 1 L1 9" stroke="#1e9be6" stroke-width="1.9"/></svg>
<svg style="position:absolute;left:28px;top:939px" width="20" height="20" viewBox="0 0 20 20" ><circle cx="10" cy="10" r="9.6" fill="#4a84c4"/><circle cx="10" cy="5.6" r="1.7" fill="#fff"/><rect x="8.5" y="8.4" width="3" height="7.4" fill="#fff"/></svg>
<div class="t" style="left:70.0px;top:938.0px;height:24px;line-height:24px;color:#3c3c3c;letter-spacing:0.16px">7.2.9054.10 Standard</div>
<div style="left:229px;top:938px;width:1px;height:20px;background:#c4c4c4"></div>
<svg style="position:absolute;left:244px;top:938px" width="15" height="20" viewBox="0 0 15 20" ><path d="M0.8 3.5 V16 Q0.8 19 7.5 19 Q14.2 19 14.2 16 V3.5 Z" fill="url(#gDb)" stroke="#c9721a" stroke-width="0.8"/><ellipse cx="7.5" cy="3.5" rx="6.7" ry="2.8" fill="#ffe9b0" stroke="#c9721a" stroke-width="0.8"/><path d="M0.8 7.8 Q7.5 11.4 14.2 7.8 M0.8 12 Q7.5 15.6 14.2 12" fill="none" stroke="#c9721a" stroke-width="0.9"/></svg>
<div class="t" style="left:282.0px;top:938.0px;height:24px;line-height:24px;color:#3c3c3c;letter-spacing:0.16px">localhost (utf8)</div>
<div style="left:399px;top:938px;width:1px;height:20px;background:#c4c4c4"></div>
<svg style="position:absolute;left:412px;top:938px" width="18" height="19" viewBox="0 0 18 19" ><path d="M0.5 17 Q0.5 11.5 6 10.8 L9 10.5 L12 10.8 Q17.5 11.5 17.5 17 Q9 19.6 0.5 17 Z" fill="#8cc24c" stroke="#6a9a34" stroke-width="0.6"/><ellipse cx="9" cy="6.2" rx="4.2" ry="5" fill="url(#gSkin)"/><path d="M4.6 6 Q4 0.5 9 0.5 Q14 0.5 13.4 6 Q12.4 3 9 3.3 Q5.6 3 4.6 6 Z" fill="url(#gHair)"/></svg>
<div class="t" style="left:452.0px;top:938.0px;height:24px;line-height:24px;color:#3c3c3c;letter-spacing:-0.27px">NIKOLAY (MAIN)</div>
<div style="left:578px;top:938px;width:1px;height:20px;background:#c4c4c4"></div>
<svg style="position:absolute;left:591.5px;top:938.5px" width="18" height="18" viewBox="0 0 18 18" ><rect x="0.6" y="0.6" width="16.8" height="16.8" rx="1" fill="#f4f6fc" stroke="#8a94c4" stroke-width="1"/><rect x="0.6" y="0.6" width="16.8" height="4.4" fill="#d85a4a"/><text x="9" y="15" font-family="Liberation Sans, sans-serif" font-size="10" font-weight="bold" text-anchor="middle" fill="#333a5a">31</text></svg>
<div class="t" style="left:630.5px;top:938.0px;height:24px;line-height:24px;color:#3c3c3c;letter-spacing:0.39px">04.09.2024</div>
<div style="left:727px;top:938px;width:1px;height:20px;background:#c4c4c4"></div>
<div class="t" style="left:762.0px;top:938.0px;height:24px;line-height:24px;color:#3c3c3c;letter-spacing:0.35px">00:00:00:006</div>
<div style="left:876px;top:938px;width:1px;height:20px;background:#c4c4c4"></div>
<div style="left:1400.5px;top:938px;width:1.5px;height:20px;background:#cfcfcf"></div>
<div style="left:1426.2px;top:944.1999999999999px;width:2.2px;height:2.2px;background:#777"></div>
<div style="left:1421.2px;top:949.3px;width:2.2px;height:2.2px;background:#777"></div>
<div style="left:1426.2px;top:949.3px;width:2.2px;height:2.2px;background:#777"></div>
<div style="left:1416.2px;top:954.3px;width:2.2px;height:2.2px;background:#777"></div>
<div style="left:1421.2px;top:954.3px;width:2.2px;height:2.2px;background:#777"></div>
<div style="left:1426.2px;top:954.3px;width:2.2px;height:2.2px;background:#777"></div>
</body></html>
